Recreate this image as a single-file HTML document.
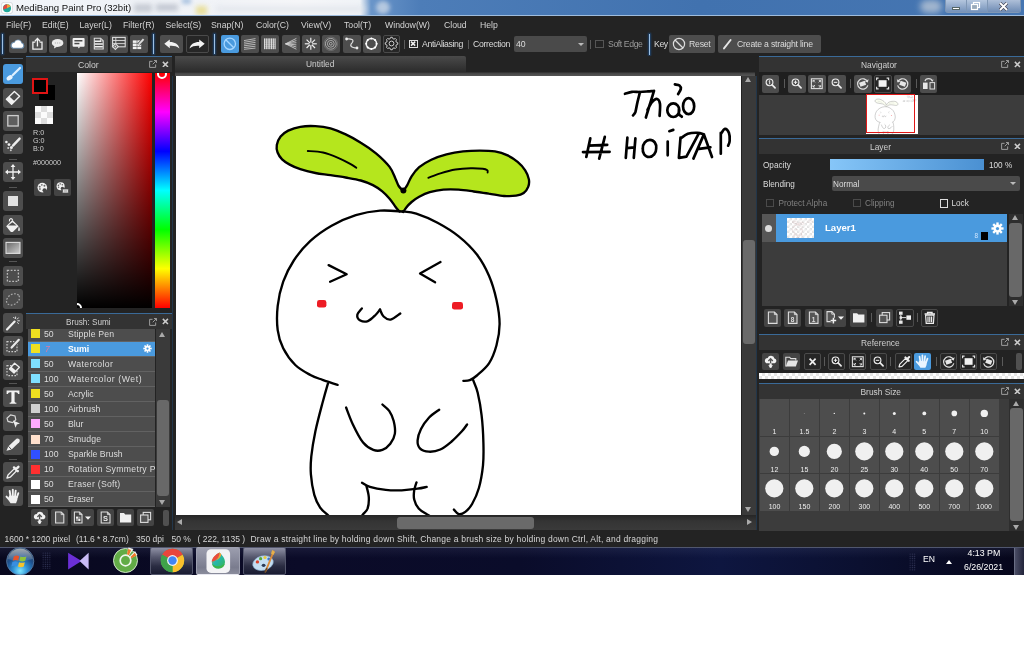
<!DOCTYPE html>
<html>
<head>
<meta charset="utf-8">
<title>MediBang Paint Pro</title>
<style>
*{box-sizing:border-box;margin:0;padding:0}
html,body{width:1024px;height:661px;overflow:hidden;background:#fff}
body{font-family:"Liberation Sans",sans-serif;font-size:9px;color:#dcdcdc;position:relative}
#app{position:absolute;left:0;top:0;width:1024px;height:575px;background:#232323;overflow:hidden;opacity:.999}
#app div,#app span,#app svg{position:absolute}
.t{white-space:nowrap;line-height:10px;font-size:8.7px;color:#dcdcdc}
#title{left:0;top:0;width:1024px;height:16px;overflow:hidden;background:linear-gradient(90deg,#f2f5f9 0,#eef1f6 150px,#f6f7f9 300px,#f1f4f8 360px,#6a95c9 371px,#4d7db8 420px,#4172af 700px,#4676b2 1024px)}
#menu{left:0;top:16px;width:1024px;height:17px;background:#232323}
#menu span{top:4px;font-size:8.7px;line-height:10px;color:#d4d4d4;white-space:nowrap}
#tb{left:0;top:33px;width:1024px;height:23px;background:#232323}
.b{width:18px;height:18px;background:#4d4d4d;border-radius:2px}
.bd{width:18px;height:18px;background:#262626;border:1px solid #4a4a4a;border-radius:2px}
.bb{width:18px;height:18px;background:#4a9ade;border-radius:2px}
.vs{width:1px;background:#9cbfe2;box-shadow:0 0 2px 1px #1f4570}
.sp{width:1px;background:#5a5a5a}
.ph{height:15px;background:#333;border-top:1px solid #3a6a98}
.ph .t{top:3px;color:#cfcfcf}
</style>
</head>
<body>
<div id="app">
<div id="title"><div style="left:134px;top:4px;width:18px;height:8px;background:#b9bec8;filter:blur(2.5px);opacity:.75"></div><div style="left:156px;top:4px;width:22px;height:7px;background:#b4bac6;filter:blur(2.5px);opacity:.75"></div><div style="left:182px;top:-2px;width:9px;height:6px;background:#8fb0d8;filter:blur(2px);opacity:.7"></div><div style="left:215px;top:6px;width:150px;height:6px;background:#dfe3ea;filter:blur(3px);opacity:.8"></div><div style="left:196px;top:6px;width:11px;height:9px;background:#e6d87a;filter:blur(2.5px);opacity:.75"></div><div style="left:376px;top:1px;width:14px;height:13px;border-radius:7px;background:#c9d6e6;filter:blur(2px);opacity:.8"></div><div style="left:920px;top:0px;width:22px;height:13px;border-radius:8px;background:#b9c6d6;filter:blur(3px);opacity:.8"></div><div style="left:0;top:15px;width:1024px;height:1px;background:#9fbcdc"></div><svg style="left:1px;top:2px" width="12" height="12" viewBox="0 0 12 12"><rect x=".3" y=".3" width="11.4" height="11.4" rx="2.8" fill="#fdfdfd" stroke="#c4c9d2" stroke-width=".6"/><circle cx="6" cy="6.3" r="4" fill="#1fa89a"/><path d="M6 2.3 A4 4 0 0 0 2.3 7.5 L6 6.3Z" fill="#e8483f"/><path d="M6 2.3 A4 4 0 0 1 9.6 4.6 L6 6.3Z" fill="#f2a33a"/></svg><span class="t" style="left:16px;top:3px;font-size:9.6px;color:#111">MediBang Paint Pro (32bit)</span><div style="left:945px;top:0;width:76px;height:13px;border:1px solid #7f97b5;border-top:none;border-radius:0 0 3px 3px;background:linear-gradient(#b4c6de,#7592ba)"></div><div style="left:966px;top:0;width:1px;height:12px;background:#7f97b5"></div><div style="left:987px;top:0;width:1px;height:12px;background:#7f97b5"></div><div style="left:988px;top:0;width:32px;height:12px;background:linear-gradient(#aebfd8,#6e8bb4)"></div><div style="left:952px;top:7px;width:8px;height:3px;background:#fff;border:1px solid #566"></div><svg style="left:970px;top:1px" width="12" height="11" viewBox="0 0 12 11"><rect x="3.5" y="1.5" width="6" height="5" fill="none" stroke="#fff" stroke-width="1.2"/><rect x="1.5" y="3.5" width="6" height="5" fill="#9ab" stroke="#fff" stroke-width="1.2"/></svg><svg style="left:998px;top:2px" width="11" height="9" viewBox="0 0 11 9"><path d="M2 1 L9 8 M9 1 L2 8" stroke="#445" stroke-width="3.2"/><path d="M2 1 L9 8 M9 1 L2 8" stroke="#fff" stroke-width="1.8"/></svg></div>
<div id="menu"><span style="left:6px">File(F)</span><span style="left:42px">Edit(E)</span><span style="left:79.5px">Layer(L)</span><span style="left:123px">Filter(R)</span><span style="left:165.5px">Select(S)</span><span style="left:211px">Snap(N)</span><span style="left:256px">Color(C)</span><span style="left:301px">View(V)</span><span style="left:344px">Tool(T)</span><span style="left:385px">Window(W)</span><span style="left:444px">Cloud</span><span style="left:480px">Help</span></div>
<div id="tb"><div class="vs" style="left:2px;top:1px;height:20px"></div><div class="b" style="left:9px;top:2px" id="tb0"><svg style="left:0;top:0" width="18" height="18" viewBox="0 0 18 18"><path d="M4.2 13H12.6A2.5 2.5 0 0 0 12.4 8.1A3.6 3.6 0 0 0 5.6 7.6A2.8 2.8 0 0 0 4.2 13Z" fill="#8cc8ff" stroke="#8cc8ff" stroke-width="1.6" opacity=".55"/><path d="M4.2 12.8H12.6A2.4 2.4 0 0 0 12.4 8.2A3.5 3.5 0 0 0 5.6 7.7A2.7 2.7 0 0 0 4.2 12.8Z" fill="#fff"/></svg></div><div class="b" style="left:29.2px;top:2px" id="tb1"><svg style="left:0;top:0" width="18" height="18" viewBox="0 0 18 18"><path d="M6.3 7.2H3.9V14.2H13V7.2H10.6" fill="none" stroke="#f0f0f0" stroke-width="1.3" /><path d="M8.45 11.6V3.6M5.9 6.2L8.45 3.4L11 6.2" fill="none" stroke="#f0f0f0" stroke-width="1.3" /></svg></div><div class="b" style="left:49.4px;top:2px" id="tb2"><svg style="left:0;top:0" width="18" height="18" viewBox="0 0 18 18"><ellipse cx="8.6" cy="8" rx="5.8" ry="3.9" fill="#ececec"/><path d="M5.5 10.5L5 13.6L8.5 11.6Z" fill="#ececec"/><circle cx="6.4" cy="8" r=".7" fill="#bbb"/><circle cx="8.6" cy="8" r=".7" fill="#bbb"/><circle cx="10.8" cy="8" r=".7" fill="#bbb"/></svg></div><div class="b" style="left:69.6px;top:2px" id="tb3"><svg style="left:0;top:0" width="18" height="18" viewBox="0 0 18 18"><rect x="2.6" y="3" width="12" height="8.8" rx="1" fill="#f2f2f2"/><path d="M7.6 11.6L8.9 13.4L10.2 11.6Z" fill="#f2f2f2"/><rect x="4.4" y="5" width="8" height="1.5" fill="#4a4a4a"/><rect x="4.4" y="7.8" width="5" height="1.5" fill="#4a4a4a"/></svg></div><div class="b" style="left:89.8px;top:2px" id="tb4"><svg style="left:0;top:0" width="18" height="18" viewBox="0 0 18 18"><path d="M4.3 3.2H10.6L13.2 5.8V14H4.3Z" fill="none" stroke="#ddd" stroke-width="1.1" /><path d="M10.4 3.4V6H13" fill="none" stroke="#ddd" stroke-width="0.9" /><path d="M4.6 6.2H11M4.6 9H12.8M4.6 11.8H12.8" fill="none" stroke="#f2f2f2" stroke-width="1.5" /></svg></div><div class="b" style="left:110px;top:2px" id="tb5"><svg style="left:0;top:0" width="18" height="18" viewBox="0 0 18 18"><rect x="2.6" y="2.4" width="12.6" height="9.4" fill="none" stroke="#ddd" stroke-width="1.1" /><path d="M2.6 5.5H15.2M2.6 8.6H15.2M5.8 2.4V11.8" fill="none" stroke="#ddd" stroke-width="0.9" /><path d="M5.4 8.6L8.3 11.5L5.4 14.4L2.5 11.5Z" fill="#4d4d4d" stroke="#ddd" stroke-width="1.1"/><circle cx="5.4" cy="11.5" r=".9" fill="#ddd"/></svg></div><div class="b" style="left:130.2px;top:2px" id="tb6"><svg style="left:0;top:0" width="18" height="18" viewBox="0 0 18 18"><rect x="2.8" y="5.4" width="3.9" height="2.5" fill="#f0f0f0"/><rect x="7.3" y="5.4" width="3.9" height="2.5" fill="#f0f0f0"/><rect x="2.8" y="8.5" width="3.9" height="2.5" fill="#f0f0f0"/><rect x="7.3" y="8.5" width="3.9" height="2.5" fill="#f0f0f0"/><rect x="2.8" y="11.6" width="3.9" height="2.5" fill="#f0f0f0"/><rect x="7.3" y="11.6" width="3.9" height="2.5" fill="#f0f0f0"/><path d="M8.6 9.6L13.4 4.4" stroke="#4d4d4d" stroke-width="3.4"/><path d="M9 9.2L13.6 4.2" stroke="#ddd" stroke-width="1.9"/><path d="M8.2 10.6L8.7 8.6L10 9.8Z" fill="#ddd"/></svg></div><div class="vs" style="left:153px;top:1px;height:20px"></div><div class="b" style="left:160px;top:2px;width:23px" id="undo"><svg style="left:0;top:0" width="23" height="18" viewBox="0 0 23 18"><path d="M4.3 8.8L9.8 4.4V7C14.5 6.9 18.3 9 19.5 13.4C16.8 10.9 13.4 10.5 9.8 10.7V13.2Z" fill="#f2f2f2"/></svg></div><div class="bd" style="left:186px;top:2px;width:23px" id="redo"><svg style="left:-1px;top:-1px" width="23" height="18" viewBox="0 0 23 18"><g transform="translate(23,0) scale(-1,1)"><path d="M4.3 8.8L9.8 4.4V7C14.5 6.9 18.3 9 19.5 13.4C16.8 10.9 13.4 10.5 9.8 10.7V13.2Z" fill="#f2f2f2"/></g></svg></div><div class="vs" style="left:214px;top:1px;height:20px"></div><div class="bb" style="left:221px;top:2px" id="sn0"><svg style="left:0;top:0" width="18" height="18" viewBox="0 0 18 18"><circle cx="8.8" cy="8.8" r="5.7" fill="none" stroke="#a6d6ff" stroke-width="1.3" /><path d="M4.8 4.8L12.8 12.8" fill="none" stroke="#a6d6ff" stroke-width="1.3" /></svg></div><div class="b" style="left:241px;top:2px" id="sn1"><svg style="left:0;top:0" width="18" height="18" viewBox="0 0 18 18"><g fill="none" stroke="#cfcfcf" stroke-width="0.8" ><path d="M3 5.6L14.5 3.6"/><path d="M3 7.3L14.5 5.5"/><path d="M3 9.1L14.5 7.4"/><path d="M3 10.8L14.5 9.3"/><path d="M3 12.6L14.5 11.2"/><path d="M3 14.3L14.5 13.1"/></g></svg></div><div class="b" style="left:261.3px;top:2px" id="sn2"><svg style="left:0;top:0" width="18" height="18" viewBox="0 0 18 18"><g fill="none" stroke="#e8e8e8" stroke-width="1.0" ><path d="M3.2 4.2H14.4" stroke-width=".5" stroke="#aaa"/><path d="M3.2 6.0H14.4" stroke-width=".5" stroke="#aaa"/><path d="M3.2 7.8H14.4" stroke-width=".5" stroke="#aaa"/><path d="M3.2 9.6H14.4" stroke-width=".5" stroke="#aaa"/><path d="M3.2 11.4H14.4" stroke-width=".5" stroke="#aaa"/><path d="M3.2 13.2H14.4" stroke-width=".5" stroke="#aaa"/><path d="M3.6 3.4V14.2"/><path d="M5.3 3.4V14.2"/><path d="M7.1 3.4V14.2"/><path d="M8.8 3.4V14.2"/><path d="M10.6 3.4V14.2"/><path d="M12.3 3.4V14.2"/><path d="M14.1 3.4V14.2"/></g></svg></div><div class="b" style="left:281.6px;top:2px" id="sn3"><svg style="left:0;top:0" width="18" height="18" viewBox="0 0 18 18"><g fill="none" stroke="#d8d8d8" stroke-width="0.8" ><path d="M3.6 8.8L14.4 3.4"/><path d="M3.6 8.8L14.4 5.6"/><path d="M3.6 8.8L14.4 7.7"/><path d="M3.6 8.8L14.4 9.9"/><path d="M3.6 8.8L14.4 12.0"/><path d="M3.6 8.8L14.4 14.2"/></g></svg></div><div class="b" style="left:302px;top:2px" id="sn4"><svg style="left:0;top:0" width="18" height="18" viewBox="0 0 18 18"><g fill="none" stroke="#eee" stroke-width="1.2" ><path d="M10.20 8.80L14.80 8.80"/><path d="M9.79 9.79L13.04 13.04"/><path d="M8.80 10.20L8.80 14.80"/><path d="M7.81 9.79L4.56 13.04"/><path d="M7.40 8.80L2.80 8.80"/><path d="M7.81 7.81L4.56 4.56"/><path d="M8.80 7.40L8.80 2.80"/><path d="M9.79 7.81L13.04 4.56"/></g></svg></div><div class="b" style="left:322px;top:2px" id="sn5"><svg style="left:0;top:0" width="18" height="18" viewBox="0 0 18 18"><g fill="none" stroke="#c4c4c4" stroke-width="0.75" ><circle cx="8.8" cy="8.8" r="1.4"/><circle cx="8.8" cy="8.8" r="3.4"/><circle cx="8.8" cy="8.8" r="5.4"/><circle cx="8.8" cy="8.8" r="6.8" stroke-width=".5" stroke="#888"/></g></svg></div><div class="b" style="left:342.5px;top:2px" id="sn6"><svg style="left:0;top:0" width="18" height="18" viewBox="0 0 18 18"><path d="M3.6 4C8 3.4 11.8 4.6 9 7.8C6.4 10.6 7.8 13 14 13" fill="none" stroke="#ddd" stroke-width="1.2" /><circle cx="3.6" cy="4" r="1.4" fill="#eee"/><circle cx="14" cy="13" r="1.4" fill="#eee"/></svg></div><div class="b" style="left:363px;top:2px" id="sn7"><svg style="left:0;top:0" width="18" height="18" viewBox="0 0 18 18"><circle cx="8.4" cy="8.7" r="5.2" fill="none" stroke="#eee" stroke-width="1.5" /><circle cx="13.60" cy="8.70" r="1" fill="#fff"/><circle cx="12.08" cy="12.38" r="1" fill="#fff"/><circle cx="8.40" cy="13.90" r="1" fill="#fff"/><circle cx="4.72" cy="12.38" r="1" fill="#fff"/><circle cx="3.20" cy="8.70" r="1" fill="#fff"/><circle cx="4.72" cy="5.02" r="1" fill="#fff"/><circle cx="8.40" cy="3.50" r="1" fill="#fff"/><circle cx="12.08" cy="5.02" r="1" fill="#fff"/></svg></div><div class="bd" style="left:383px;top:2px;width:17px" id="sn8"><svg style="left:-1px;top:-1px" width="17" height="18" viewBox="0 0 17 18"><path d="M14.75 7.75L14.75 9.25L13.32 9.85L12.86 10.95L13.46 12.39L12.39 13.46L10.95 12.86L9.85 13.32L9.25 14.75L7.75 14.75L7.15 13.32L6.05 12.86L4.61 13.46L3.54 12.39L4.14 10.95L3.68 9.85L2.25 9.25L2.25 7.75L3.68 7.15L4.14 6.05L3.54 4.61L4.61 3.54L6.05 4.14L7.15 3.68L7.75 2.25L9.25 2.25L9.85 3.68L10.95 4.14L12.39 3.54L13.46 4.61L12.86 6.05L13.32 7.15Z" fill="none" stroke="#cfcfcf" stroke-width="1.0" /><circle cx="8.5" cy="8.5" r="2.4" fill="none" stroke="#cfcfcf" stroke-width="1.0" /></svg></div><div class="sp" style="left:404px;top:7px;height:9px"></div><div style="left:409px;top:7px;width:9px;height:8px;border:1px solid #ddd" id="cbaa"><svg style="left:-1px;top:-1px" width="9" height="8" viewBox="0 0 9 8"><path d="M2 1.6L6.2 5.6M6.2 1.6L2 5.6" fill="none" stroke="#eee" stroke-width="1.5" /></svg></div><span class="t" style="left:422px;top:6px;letter-spacing:-.37px">AntiAliasing</span><div class="sp" style="left:468px;top:7px;height:9px"></div><span class="t" style="left:473px;top:6px;letter-spacing:-.31px">Correction</span><div style="left:514px;top:3px;width:73px;height:16px;background:#4a4a4a;border-radius:2px"></div><span class="t" style="left:516px;top:6px">40</span><div style="left:578px;top:10px;width:0;height:0;border:3px solid transparent;border-top:3px solid #bbb"></div><div class="sp" style="left:590px;top:7px;height:9px"></div><div style="left:595px;top:7px;width:9px;height:8px;border:1px solid #555"></div><span class="t" style="left:608px;top:6px;color:#9a9a9a;letter-spacing:-.4px">Soft Edge</span><div class="vs" style="left:649px;top:1px;height:21px"></div><span class="t" style="left:654px;top:6px;letter-spacing:-.4px">Key</span><div class="b" style="left:669px;top:2px;width:46px;height:18px" id="reset"><svg style="left:0;top:0" width="46" height="18" viewBox="0 0 46 18"><circle cx="10" cy="9" r="5.6" fill="none" stroke="#ddd" stroke-width="1.2" /><path d="M6 5L14 13" fill="none" stroke="#ddd" stroke-width="1.2" /></svg></div><span class="t" style="left:689px;top:6px;letter-spacing:-.24px">Reset</span><div class="b" style="left:718px;top:2px;width:103px;height:18px" id="csl"><svg style="left:0;top:0" width="103" height="18" viewBox="0 0 103 18"><path d="M6 13.4L12.6 5" stroke="#e6e6e6" stroke-width="1.9" stroke-linecap="round"/></svg></div><span class="t" style="left:737px;top:6px;letter-spacing:-.2px">Create a straight line</span></div>
<div style="left:26px;top:56px;width:146px;height:1px;background:#3f6f9d"></div><div id="lt" style="left:0;top:57px;width:26px;height:474px;background:#232323"><div style="left:3px;top:1px;width:20px;height:1px;background:#4a5a6a"></div><div class="bb" style="left:3px;top:6.799999999999997px;width:20px;height:20px;border-radius:3px" id="lt0"><svg style="left:0;top:0" width="20" height="20" viewBox="0 0 20 20"><path d="M17 4L9.8 11" stroke="#dff0ff" stroke-width="2.2" stroke-linecap="round"/><ellipse cx="6.6" cy="13.8" rx="3.3" ry="2.2" transform="rotate(-35 6.6 13.8)" fill="#e8f4ff"/></svg></div><div class="b" style="left:3px;top:30.700000000000003px;width:20px;height:20px;border-radius:3px" id="lt1"><svg style="left:0;top:0" width="20" height="20" viewBox="0 0 20 20"><path d="M11.4 3.6L16.6 8.2L8.6 16.2L3.4 11.2Z" fill="none" stroke="#f2f2f2" stroke-width="1.4" stroke-linejoin="round"/><path d="M6.4 8.4L11.6 13.2L8.6 16.2L3.4 11.2Z" fill="#f2f2f2"/></svg></div><div class="b" style="left:3px;top:54px;width:20px;height:20px;border-radius:3px" id="lt2"><svg style="left:0;top:0" width="20" height="20" viewBox="0 0 20 20"><rect x="4.8" y="4.6" width="10.4" height="10.4" fill="#5e5e5e" stroke="#ccc" stroke-width="1.3"/></svg></div><div class="b" style="left:3px;top:77px;width:20px;height:20px;border-radius:3px" id="lt3"><svg style="left:0;top:0" width="20" height="20" viewBox="0 0 20 20"><path d="M16.6 4.6L10 11.6" stroke="#eee" stroke-width="2.4" stroke-linecap="round"/><circle cx="3.4" cy="8" r="1.3" fill="#eee"/><circle cx="6" cy="10.6" r="1.4" fill="#eee"/><circle cx="8.4" cy="13.4" r="1.5" fill="#eee"/><circle cx="5.2" cy="14" r="1" fill="#ccc"/><circle cx="7.8" cy="16.2" r="1" fill="#ccc"/></svg></div><div class="b" style="left:3px;top:105.19999999999999px;width:20px;height:20px;border-radius:3px" id="lt4"><svg style="left:0;top:0" width="20" height="20" viewBox="0 0 20 20"><path d="M10 3.4V16.6M3.4 10H16.6" fill="none" stroke="#f0f0f0" stroke-width="1.3" /><path d="M10 2L12.4 5H7.6ZM10 18L12.4 15H7.6ZM2 10L5 7.6V12.4ZM18 10L15 7.6V12.4Z" fill="#f0f0f0"/></svg></div><div class="b" style="left:3px;top:134.3px;width:20px;height:20px;border-radius:3px" id="lt5"><svg style="left:0;top:0" width="20" height="20" viewBox="0 0 20 20"><rect x="5" y="5" width="10" height="10" fill="#e2e2e2"/></svg></div><div class="b" style="left:3px;top:157.7px;width:20px;height:20px;border-radius:3px" id="lt6"><svg style="left:0;top:0" width="20" height="20" viewBox="0 0 20 20"><path d="M3.2 11.2L9.4 5L15.6 11.2L10 16.8Q8.6 17.6 7.4 16.4Z" fill="#f0f0f0"/><path d="M5.2 10.6L9.4 7.2L13.6 10.6Z" fill="#4d4d4d"/><path d="M6.4 6.4C6 3.4 8.6 2.6 9.8 5.4" fill="none" stroke="#f0f0f0" stroke-width="1.1" /><path d="M15.8 11.6C17 13.4 17 14.4 16.6 15.8C15.8 16.4 15 15.6 15.2 14.4Z" fill="#f0f0f0"/></svg></div><div class="b" style="left:3px;top:180.7px;width:20px;height:20px;border-radius:3px" id="lt7"><svg style="left:0;top:0" width="20" height="20" viewBox="0 0 20 20"><defs><linearGradient id="gg" x1="0" y1="0" x2="1" y2="1"><stop offset="0" stop-color="#666"/><stop offset="1" stop-color="#cfcfcf"/></linearGradient></defs><rect x="3" y="4.4" width="14" height="11" fill="url(#gg)" stroke="#ddd" stroke-width="1.1"/></svg></div><div class="b" style="left:3px;top:208.8px;width:20px;height:20px;border-radius:3px" id="lt8"><svg style="left:0;top:0" width="20" height="20" viewBox="0 0 20 20"><rect x="4.4" y="4.4" width="11" height="11" fill="none" stroke="#b8b8b8" stroke-width="1.3" stroke-dasharray="1.8 1.5"/></svg></div><div class="b" style="left:3px;top:232px;width:20px;height:20px;border-radius:3px" id="lt9"><svg style="left:0;top:0" width="20" height="20" viewBox="0 0 20 20"><ellipse cx="10" cy="10.4" rx="7" ry="5" transform="rotate(-32 10 10.4)" fill="none" stroke="#a8a8a8" stroke-width="1.2" stroke-dasharray="1.7 1.5"/></svg></div><div class="b" style="left:3px;top:255.60000000000002px;width:20px;height:20px;border-radius:3px" id="lt10"><svg style="left:0;top:0" width="20" height="20" viewBox="0 0 20 20"><path d="M4 16.4L11.6 8.6" stroke="#eee" stroke-width="2.2" stroke-linecap="round"/><path d="M12.6 3.6V6M15.6 4.6L14 6.4M16.8 7.8H14.4M15.8 10.8L14.2 9.4M11.4 5.4L10.4 4" fill="none" stroke="#ddd" stroke-width="1" /></svg></div><div class="b" style="left:3px;top:278.9px;width:20px;height:20px;border-radius:3px" id="lt11"><svg style="left:0;top:0" width="20" height="20" viewBox="0 0 20 20"><rect x="4" y="5.6" width="10" height="10" fill="none" stroke="#ccc" stroke-width="1.2" stroke-dasharray="1.6 1.4"/><path d="M15.8 3.8L8.6 11.6" stroke="#4d4d4d" stroke-width="4"/><path d="M15.8 3.8L8.6 11.6" stroke="#e8e8e8" stroke-width="2.2" stroke-linecap="round"/></svg></div><div class="b" style="left:3px;top:302.5px;width:20px;height:20px;border-radius:3px" id="lt12"><svg style="left:0;top:0" width="20" height="20" viewBox="0 0 20 20"><rect x="4" y="5.6" width="10" height="10" fill="none" stroke="#ccc" stroke-width="1.2" stroke-dasharray="1.6 1.4"/><path d="M11.6 3.2L16.4 7.2L11 13L6.4 9Z" fill="#4d4d4d" stroke="#eee" stroke-width="1.3" stroke-linejoin="round"/><path d="M8.4 6.8L13 10.8L11 13L6.4 9Z" fill="#eee"/></svg></div><div class="b" style="left:3px;top:330px;width:20px;height:20px;border-radius:3px" id="lt13"><svg style="left:0;top:0" width="20" height="20" viewBox="0 0 20 20"><path d="M3.6 3.4H16.4V7H15.2Q14.8 5.2 13 5.2H11.6V14.4Q11.6 15.8 13.4 15.8V16.8H6.6V15.8Q8.4 15.8 8.4 14.4V5.2H7Q5.2 5.2 4.8 7H3.6Z" fill="#f2f2f2"/></svg></div><div class="b" style="left:3px;top:354px;width:20px;height:20px;border-radius:3px" id="lt14"><svg style="left:0;top:0" width="20" height="20" viewBox="0 0 20 20"><path d="M4 7.2L7.6 3.8L12 5L12.8 8.8L9.6 11.6L5 10.4Z" fill="none" stroke="#d8d8d8" stroke-width="1.2" /><path d="M10 9.4L17 12.6L13.8 13.6L12.6 16.8Z" fill="#eee"/></svg></div><div class="b" style="left:3px;top:377.6px;width:20px;height:20px;border-radius:3px" id="lt15"><svg style="left:0;top:0" width="20" height="20" viewBox="0 0 20 20"><path d="M3.4 15.8L5.4 11.2L13.4 3.8Q15 3 16.4 4.4Q17.4 5.8 16.2 7.2L8.6 14.6Z" fill="#eee"/><path d="M5.4 11.2L8.6 14.6" stroke="#4d4d4d" stroke-width="1"/></svg></div><div class="b" style="left:3px;top:405.4px;width:20px;height:20px;border-radius:3px" id="lt16"><svg style="left:0;top:0" width="20" height="20" viewBox="0 0 20 20"><path d="M4 16L5 13L11.4 6.6L13.6 8.8L7.2 15.2Z" fill="none" stroke="#eee" stroke-width="1.3" stroke-linejoin="round"/><path d="M11 5.4L14.8 9.2M13 7.2L15.4 4.8" stroke="#eee" stroke-width="2.4" stroke-linecap="round"/></svg></div><div class="b" style="left:3px;top:428.8px;width:20px;height:20px;border-radius:3px" id="lt17"><svg style="left:0;top:0" width="20" height="20" viewBox="0 0 20 20"><g stroke="#f0f0f0" stroke-width="1.9" stroke-linecap="round" fill="none"><path d="M7.5 10.4L6.7 5M9.8 10L9.8 3.6M12 10.4L12.7 4.6M13.8 11.4L15.3 7.2M6.2 13.6L3.5 10.6"/></g><path d="M6.2 9.6L14.6 10.2Q14.8 14.4 13 17.2H7.6Q5.4 14.8 5.2 12Z" fill="#f0f0f0"/></svg></div><div style="left:9px;top:101.5px;width:8px;height:1px;background:#555"></div><div style="left:9px;top:129.5px;width:8px;height:1px;background:#555"></div><div style="left:9px;top:204px;width:8px;height:1px;background:#555"></div><div style="left:9px;top:326px;width:8px;height:1px;background:#555"></div><div style="left:9px;top:401.8px;width:8px;height:1px;background:#555"></div></div>
<div id="colp" style="left:26px;top:57px;width:146px;height:256px;background:#232323"><div class="ph" style="left:0;top:0;width:146px;border-top:none"><span class="t" style="left:52px">Color</span><svg style="left:123px;top:3.2px" width="8" height="8" viewBox="0 0 9 9"><path d="M4 1.5H0.7V8.3H7.5V5" fill="none" stroke="#aaa" stroke-width="1"/><path d="M4.2 4.8L8.3 0.7M5.6 0.6H8.4V3.4" fill="none" stroke="#aaa" stroke-width="1"/></svg><svg style="left:136px;top:3.6px" width="6.8" height="6.8" viewBox="0 0 8 8"><path d="M1 1L7 7M7 1L1 7" stroke="#ccc" stroke-width="1.8"/></svg></div><div style="left:13.4px;top:28.3px;width:15.7px;height:14.6px;background:#000"></div><div style="left:5.9px;top:20.9px;width:16.2px;height:15.8px;background:#000;border:2px solid #e01414"></div><div style="left:9px;top:49px;width:17.5px;height:17.5px;background:#fbfbfb"><div style="left:6px;top:0;width:6px;height:6px;background:#dedede"></div><div style="left:0;top:6px;width:6px;height:6px;background:#dedede"></div><div style="left:12px;top:6px;width:5.5px;height:6px;background:#dedede"></div><div style="left:6px;top:12px;width:6px;height:5.5px;background:#dedede"></div></div><span class="t" style="left:7px;top:72px;font-size:7.2px;line-height:8px;color:#ccc">R:0</span><span class="t" style="left:7px;top:80px;font-size:7.2px;line-height:8px;color:#ccc">G:0</span><span class="t" style="left:7px;top:88px;font-size:7.2px;line-height:8px;color:#ccc">B:0</span><span class="t" style="left:7px;top:102px;font-size:7.2px;line-height:8px;color:#ccc">#000000</span><div class="b" style="left:8px;top:121.5px;width:17px;height:17px;background:#444" id="pal0"><svg style="left:0;top:0" width="17" height="17" viewBox="0 0 17 17"><circle cx="8.3" cy="8.6" r="4.8" fill="#f2f2f2"/><circle cx="10.5" cy="11.2" r="2.0" fill="#444"/><circle cx="5.68" cy="7.65" r="0.96" fill="#666"/><circle cx="7.82" cy="5.86" r="0.96" fill="#777"/><circle cx="10.43" cy="6.81" r="0.96" fill="#666"/><circle cx="5.89" cy="9.99" r="0.96" fill="#777"/></svg></div><div class="b" style="left:28px;top:121.5px;width:17px;height:17px;background:#444" id="pal1"><svg style="left:0;top:0" width="17" height="17" viewBox="0 0 17 17"><circle cx="6.6" cy="7.2" r="4.0" fill="#f2f2f2"/><circle cx="8.4" cy="9.4" r="1.7" fill="#444"/><circle cx="4.42" cy="6.41" r="0.80" fill="#666"/><circle cx="6.20" cy="4.92" r="0.80" fill="#777"/><circle cx="8.38" cy="5.71" r="0.80" fill="#666"/><circle cx="4.59" cy="8.36" r="0.80" fill="#777"/><rect x="8.4" y="10" width="6" height="4" rx=".6" fill="#f2f2f2" stroke="#444" stroke-width=".8"/><path d="M9.6 12H13.2" stroke="#777" stroke-width=".8"/></svg></div><div style="left:51px;top:16px;width:74.8px;height:235px;background:linear-gradient(0deg,#000,rgba(0,0,0,0)),linear-gradient(90deg,#fff,#f00);overflow:hidden"><div style="left:-5px;top:229.5px;width:10px;height:10px;border:2px solid #fff;border-radius:50%"></div></div><div style="left:128.8px;top:16px;width:15.4px;height:235px;background:linear-gradient(180deg,#f00 0%,#f0f 16.6%,#00f 33.3%,#0ff 50%,#0f0 66.6%,#ff0 83.3%,#f00 100%);overflow:hidden"><div style="left:2.5px;top:-4.5px;width:10px;height:10px;border:2px solid #fff;border-radius:50%"></div></div></div>
<div id="brp" style="left:26px;top:313px;width:146px;height:218px;background:#232323"><div class="ph" style="left:0;top:0;width:146px;height:16px"><span class="t" style="left:40px;top:4px;font-size:8.2px">Brush: Sumi</span><svg style="left:123px;top:3.6px" width="8" height="8" viewBox="0 0 9 9"><path d="M4 1.5H0.7V8.3H7.5V5" fill="none" stroke="#aaa" stroke-width="1"/><path d="M4.2 4.8L8.3 0.7M5.6 0.6H8.4V3.4" fill="none" stroke="#aaa" stroke-width="1"/></svg><svg style="left:136px;top:4.2px" width="6.8" height="6.8" viewBox="0 0 8 8"><path d="M1 1L7 7M7 1L1 7" stroke="#ccc" stroke-width="1.8"/></svg></div><div style="left:2px;top:16px;width:126.5px;height:178px;background:#626262;overflow:hidden" id="brl"><div style="left:0;top:-2.20px;width:128px;height:14px;background:#4d4d4d"><div style="left:2.5px;top:2.5px;width:9px;height:9px;background:#f0e020"></div><span class="t" style="left:16px;top:2px">50</span><span class="t" style="left:40px;top:2px;letter-spacing:0.16px">Stipple Pen</span></div><div style="left:0;top:12.83px;width:128px;height:14px;background:#4a9ade"><div style="left:2.5px;top:2.5px;width:9px;height:9px;background:#f0e020"></div><span class="t" style="left:17px;top:2px;color:#e07aa0;font-style:italic">7</span><span class="t" style="left:40px;top:2px;color:#fff;font-weight:bold">Sumi</span><svg style="left:114.5px;top:2.5px" width="9" height="9" viewBox="-6 -6 12 12"><g fill="#fff"><circle r="3.6"/><rect x="-1.1" y="-5.6" width="2.2" height="3" transform="rotate(0)"/><rect x="-1.1" y="-5.6" width="2.2" height="3" transform="rotate(45)"/><rect x="-1.1" y="-5.6" width="2.2" height="3" transform="rotate(90)"/><rect x="-1.1" y="-5.6" width="2.2" height="3" transform="rotate(135)"/><rect x="-1.1" y="-5.6" width="2.2" height="3" transform="rotate(180)"/><rect x="-1.1" y="-5.6" width="2.2" height="3" transform="rotate(225)"/><rect x="-1.1" y="-5.6" width="2.2" height="3" transform="rotate(270)"/><rect x="-1.1" y="-5.6" width="2.2" height="3" transform="rotate(315)"/></g><circle r="1.5" fill="#4a9ade"/></svg></div><div style="left:0;top:27.86px;width:128px;height:14px;background:#4d4d4d"><div style="left:2.5px;top:2.5px;width:9px;height:9px;background:#7fe0ff"></div><span class="t" style="left:16px;top:2px">50</span><span class="t" style="left:40px;top:2px;letter-spacing:0.36px">Watercolor</span></div><div style="left:0;top:42.89px;width:128px;height:14px;background:#4d4d4d"><div style="left:2.5px;top:2.5px;width:9px;height:9px;background:#7fe0ff"></div><span class="t" style="left:16px;top:2px">100</span><span class="t" style="left:40px;top:2px;letter-spacing:0.56px">Watercolor (Wet)</span></div><div style="left:0;top:57.92px;width:128px;height:14px;background:#4d4d4d"><div style="left:2.5px;top:2.5px;width:9px;height:9px;background:#f0e020"></div><span class="t" style="left:16px;top:2px">50</span><span class="t" style="left:40px;top:2px;letter-spacing:0px">Acrylic</span></div><div style="left:0;top:72.95px;width:128px;height:14px;background:#4d4d4d"><div style="left:2.5px;top:2.5px;width:9px;height:9px;background:#d0d0d0"></div><span class="t" style="left:16px;top:2px">100</span><span class="t" style="left:40px;top:2px;letter-spacing:0px">Airbrush</span></div><div style="left:0;top:87.98px;width:128px;height:14px;background:#4d4d4d"><div style="left:2.5px;top:2.5px;width:9px;height:9px;background:#ffaaff"></div><span class="t" style="left:16px;top:2px">50</span><span class="t" style="left:40px;top:2px;letter-spacing:0px">Blur</span></div><div style="left:0;top:103.01px;width:128px;height:14px;background:#4d4d4d"><div style="left:2.5px;top:2.5px;width:9px;height:9px;background:#ffe0cc"></div><span class="t" style="left:16px;top:2px">70</span><span class="t" style="left:40px;top:2px;letter-spacing:0.15px">Smudge</span></div><div style="left:0;top:118.04px;width:128px;height:14px;background:#4d4d4d"><div style="left:2.5px;top:2.5px;width:9px;height:9px;background:#3050ff"></div><span class="t" style="left:16px;top:2px">100</span><span class="t" style="left:40px;top:2px;letter-spacing:0px">Sparkle Brush</span></div><div style="left:0;top:133.07px;width:128px;height:14px;background:#4d4d4d"><div style="left:2.5px;top:2.5px;width:9px;height:9px;background:#ff3030"></div><span class="t" style="left:16px;top:2px">10</span><span class="t" style="left:40px;top:2px;letter-spacing:0.3px">Rotation Symmetry P</span></div><div style="left:0;top:148.10px;width:128px;height:14px;background:#4d4d4d"><div style="left:2.5px;top:2.5px;width:9px;height:9px;background:#ffffff"></div><span class="t" style="left:16px;top:2px">50</span><span class="t" style="left:40px;top:2px;letter-spacing:0.25px">Eraser (Soft)</span></div><div style="left:0;top:163.13px;width:128px;height:14px;background:#4d4d4d"><div style="left:2.5px;top:2.5px;width:9px;height:9px;background:#ffffff"></div><span class="t" style="left:16px;top:2px">50</span><span class="t" style="left:40px;top:2px;letter-spacing:0px">Eraser</span></div></div><div style="left:129.5px;top:16px;width:14.5px;height:178px;background:#3a3a3a"></div><div style="left:130.5px;top:87px;width:12.5px;height:96px;background:#686868;border-radius:3px"></div><div style="left:133px;top:19px;width:0;height:0;border:3.5px solid transparent;border-bottom:5px solid #aaa;border-top:none"></div><div style="left:133px;top:186.5px;width:0;height:0;border:3.5px solid transparent;border-top:5px solid #aaa;border-bottom:none"></div><div class="b" style="left:5.1px;top:196px;width:17px;height:17px;background:#444" id="bt0"><svg style="left:0;top:0" width="17" height="17" viewBox="0 0 17 17"><g transform="translate(-1.6,-1.6) scale(1.18)"><path d="M4.9 10.0h7.2a2 2 0 0 0 -.2 -3.9a3 3 0 0 0 -5.8 -.4a2.3 2.3 0 0 0 -1.2 4.3Z" fill="#f2f2f2"/></g><path d="M8.6 6V11M6.4 8L8.6 5.6L10.8 8" fill="none" stroke="#555" stroke-width="1.3"/><path d="M8.6 10.4V14.6" stroke="#f2f2f2" stroke-width="2.2"/><path d="M6.2 12.2L8.6 15L11 12.2Z" fill="#f2f2f2"/></svg></div><div class="b" style="left:24.9px;top:196px;width:17px;height:17px;background:#444" id="bt1"><svg style="left:0;top:0" width="17" height="17" viewBox="0 0 17 17"><path d="M4.6 3.0h5.6l2.6 2.6v8.4h-8.2Z" fill="#5a5a5a" stroke="#ddd" stroke-width="1.1"/><path d="M10.2 3.0v2.6h2.6" fill="none" stroke="#ddd" stroke-width=".9"/></svg></div><div class="b" style="left:45.1px;top:196px;width:22.5px;height:17px;background:#444" id="bt2"><svg style="left:0;top:0" width="22.5" height="17" viewBox="0 0 22.5 17"><path d="M3.4 3.0h5.0l2.6 2.6v8.4h-7.6Z" fill="none" stroke="#ddd" stroke-width="1.1"/><path d="M8.4 3.0v2.6h2.6" fill="none" stroke="#ddd" stroke-width=".9"/><rect x="5" y="7.6" width="2.2" height="2.2" fill="#eee"/><rect x="7.2" y="9.8" width="2.2" height="2.2" fill="#eee"/><rect x="7.2" y="7.6" width="2.2" height="2.2" fill="#999"/><rect x="5" y="9.8" width="2.2" height="2.2" fill="#999"/><path d="M14 7.4H20L17 10.8Z" fill="#f4f4f4"/></svg></div><div class="b" style="left:70.6px;top:196px;width:17px;height:17px;background:#444" id="bt3"><svg style="left:0;top:0" width="17" height="17" viewBox="0 0 17 17"><path d="M4.2 3.0h6.2l2.6 2.6v8.4h-8.8Z" fill="none" stroke="#ddd" stroke-width="1.1"/><path d="M10.4 3.0v2.6h2.6" fill="none" stroke="#ddd" stroke-width=".9"/><text x="8.4" y="12.4" font-family="Liberation Sans" font-size="7.5" font-weight="bold" text-anchor="middle" fill="#eee">S</text></svg></div><div class="b" style="left:90.8px;top:196px;width:17px;height:17px;background:#444" id="bt4"><svg style="left:0;top:0" width="17" height="17" viewBox="0 0 17 17"><path d="M3.0 4.0h4.0l1.2 1.4h6.0v8.0h-11.2Z" fill="#f0f0f0"/></svg></div><div class="b" style="left:111px;top:196px;width:17px;height:17px;background:#444" id="bt5"><svg style="left:0;top:0" width="17" height="17" viewBox="0 0 17 17"><rect x="6.2" y="3.4" width="7.4" height="7.4" fill="none" stroke="#ddd" stroke-width="1.1"/><rect x="3.6" y="6.0" width="7.4" height="7.4" fill="#555" stroke="#ddd" stroke-width="1.1"/></svg></div><div style="left:136.5px;top:197px;width:6.5px;height:16px;background:#505050;border-radius:2px"></div></div>
<div id="cv" style="left:172px;top:56px;width:587px;height:475px;background:#232323"><div style="left:3px;top:0;width:291px;height:16px;background:linear-gradient(#4a4a4a,#2b2b2b);border-radius:0 2px 0 0"></div><span class="t" style="left:134px;top:3px;color:#cfcfcf;font-size:8.4px">Untitled</span><div style="left:3px;top:16px;width:580px;height:4px;background:linear-gradient(#2a2a2a,#484848 40%,#555)"></div><div style="left:3.5px;top:20px;width:565.5px;height:439px;background:#fff;overflow:hidden" id="paper"><svg style="left:-3.5px;top:-20px" width="587" height="475" viewBox="172 56 587 475" fill="none" stroke="#000" stroke-width="2.35" stroke-linecap="round" stroke-linejoin="round" id="art"><g id="artg"><g id="artf"><path d="M403.2 190.8C402.4 190.0 400.0 188.0 398.7 186.0C397.4 184.0 397.1 182.2 395.6 179.0C394.1 175.8 392.9 171.2 389.6 166.9C386.3 162.6 380.8 157.3 376.0 153.3C371.2 149.3 365.9 145.8 360.8 142.7C355.8 139.5 350.8 136.8 345.7 134.4C340.6 132.0 335.6 129.7 330.5 128.3C325.4 126.9 320.4 126.3 315.4 126.1C310.4 125.8 304.8 126.0 300.3 126.8C295.8 127.5 291.5 129.0 288.2 130.6C284.9 132.2 282.5 134.2 280.6 136.6C278.7 139.0 277.3 142.3 276.8 145.0C276.3 147.7 276.7 150.1 277.6 152.5C278.5 154.9 280.1 157.4 282.1 159.4C284.1 161.4 286.7 163.0 289.7 164.6C292.7 166.2 296.0 167.8 300.3 169.2C304.6 170.6 310.4 172.0 315.4 173.0C320.4 174.0 325.4 174.4 330.5 175.2C335.6 175.9 340.6 176.6 345.7 177.5C350.8 178.4 356.3 179.2 360.8 180.5C365.3 181.8 369.4 183.3 372.9 185.1C376.4 186.9 379.2 188.8 382.0 191.1C384.8 193.4 387.3 196.0 389.6 198.7C391.9 201.3 394.0 204.9 395.6 207.0C397.2 209.1 398.9 210.8 399.5 211.5 L403.3 212 L403.2 190.8Z" fill="#b5e61d" stroke="none"/><path d="M403.3 191.0C403.9 190.1 405.7 187.8 407.1 185.4C408.5 183.0 409.6 179.3 411.6 176.3C413.6 173.3 415.9 170.0 419.2 167.2C422.5 164.4 426.8 161.8 431.3 159.7C435.9 157.6 441.2 155.8 446.5 154.4C451.8 153.0 457.6 152.0 463.1 151.4C468.7 150.8 474.5 150.6 479.8 150.6C485.1 150.6 490.4 150.7 494.9 151.4C499.4 152.2 503.2 153.3 507.0 155.1C510.8 156.8 514.6 159.4 517.6 161.9C520.6 164.4 523.3 167.4 525.2 170.3C527.1 173.2 528.4 176.6 528.9 179.4C529.4 182.2 529.1 184.6 528.2 186.9C527.3 189.2 525.7 191.5 523.7 193.0C521.7 194.5 519.4 195.2 516.1 195.7C512.8 196.2 508.6 196.3 504.0 196.0C499.4 195.7 493.9 194.4 488.8 193.7C483.8 192.9 478.7 192.2 473.7 191.5C468.7 190.8 463.7 189.9 458.6 189.6C453.6 189.3 448.2 189.2 443.4 189.6C438.6 190.0 433.8 191.0 429.8 192.2C425.8 193.4 422.2 195.2 419.2 196.8C416.2 198.4 413.8 200.2 411.6 202.0C409.5 203.8 407.7 205.7 406.3 207.4C404.9 209.1 403.8 211.2 403.3 212.0 L399.5 211.5 L403.3 191Z" fill="#b5e61d" stroke="none"/><path d="M399 190 L404 190 L404.5 212 L399 212Z" fill="#b5e61d" stroke="none"/></g><g id="artl"><path d="M403.2 190.8C402.4 190.0 400.0 188.0 398.7 186.0C397.4 184.0 397.1 182.2 395.6 179.0C394.1 175.8 392.9 171.2 389.6 166.9C386.3 162.6 380.8 157.3 376.0 153.3C371.2 149.3 365.9 145.8 360.8 142.7C355.8 139.5 350.8 136.8 345.7 134.4C340.6 132.0 335.6 129.7 330.5 128.3C325.4 126.9 320.4 126.3 315.4 126.1C310.4 125.8 304.8 126.0 300.3 126.8C295.8 127.5 291.5 129.0 288.2 130.6C284.9 132.2 282.5 134.2 280.6 136.6C278.7 139.0 277.3 142.3 276.8 145.0C276.3 147.7 276.7 150.1 277.6 152.5C278.5 154.9 280.1 157.4 282.1 159.4C284.1 161.4 286.7 163.0 289.7 164.6C292.7 166.2 296.0 167.8 300.3 169.2C304.6 170.6 310.4 172.0 315.4 173.0C320.4 174.0 325.4 174.4 330.5 175.2C335.6 175.9 340.6 176.6 345.7 177.5C350.8 178.4 356.3 179.2 360.8 180.5C365.3 181.8 369.4 183.3 372.9 185.1C376.4 186.9 379.2 188.8 382.0 191.1C384.8 193.4 387.3 196.0 389.6 198.7C391.9 201.3 394.0 204.9 395.6 207.0C397.2 209.1 398.9 210.8 399.5 211.5"/><path d="M403.3 191.0C403.9 190.1 405.7 187.8 407.1 185.4C408.5 183.0 409.6 179.3 411.6 176.3C413.6 173.3 415.9 170.0 419.2 167.2C422.5 164.4 426.8 161.8 431.3 159.7C435.9 157.6 441.2 155.8 446.5 154.4C451.8 153.0 457.6 152.0 463.1 151.4C468.7 150.8 474.5 150.6 479.8 150.6C485.1 150.6 490.4 150.7 494.9 151.4C499.4 152.2 503.2 153.3 507.0 155.1C510.8 156.8 514.6 159.4 517.6 161.9C520.6 164.4 523.3 167.4 525.2 170.3C527.1 173.2 528.4 176.6 528.9 179.4C529.4 182.2 529.1 184.6 528.2 186.9C527.3 189.2 525.7 191.5 523.7 193.0C521.7 194.5 519.4 195.2 516.1 195.7C512.8 196.2 508.6 196.3 504.0 196.0C499.4 195.7 493.9 194.4 488.8 193.7C483.8 192.9 478.7 192.2 473.7 191.5C468.7 190.8 463.7 189.9 458.6 189.6C453.6 189.3 448.2 189.2 443.4 189.6C438.6 190.0 433.8 191.0 429.8 192.2C425.8 193.4 422.2 195.2 419.2 196.8C416.2 198.4 413.8 200.2 411.6 202.0C409.5 203.8 407.7 205.7 406.3 207.4C404.9 209.1 403.8 211.2 403.3 212.0"/><circle cx="403.4" cy="190.6" r="3" fill="#000" stroke="none"/><path d="M307.8 151.0C310.3 151.2 317.9 151.4 323.0 152.5C328.1 153.6 333.6 155.9 338.1 157.8C342.6 159.7 347.2 162.2 350.2 163.9C353.2 165.6 355.3 167.1 356.3 167.7" stroke-width="1.9"/><path d="M428.3 177.8C430.3 177.1 435.9 174.7 440.4 173.3C444.9 171.9 450.4 170.3 455.5 169.5C460.6 168.7 466.1 168.4 470.7 168.3C475.2 168.2 480.0 168.5 482.8 168.8C485.6 169.1 486.5 169.7 487.3 170.3C488.1 170.9 487.6 172.1 487.6 172.5" stroke-width="1.9"/><path d="M402.7 211.5C398.9 211.3 387.8 210.0 380.0 210.6C372.2 211.2 363.9 212.6 355.8 215.1C347.7 217.6 339.2 221.4 331.6 225.7C324.0 230.0 316.7 235.1 310.4 240.9C304.1 246.7 298.3 253.7 293.8 260.5C289.3 267.3 285.9 274.1 283.2 281.7C280.5 289.3 278.6 297.8 277.7 305.9C276.8 314.0 276.8 323.0 277.7 330.1C278.6 337.2 280.3 342.5 283.2 348.3C286.1 354.1 290.8 360.6 295.3 365.0C299.8 369.4 305.9 372.5 310.4 375.0C314.9 377.5 318.0 378.2 322.5 379.8C327.0 381.4 335.1 384.0 337.6 384.8"/><path d="M402.7 211.5C405.0 211.8 410.5 211.7 416.3 213.6C422.1 215.5 430.4 218.9 437.5 222.7C444.6 226.5 452.1 231.0 458.7 236.3C465.3 241.6 471.8 247.9 476.9 254.5C481.9 261.1 485.7 268.1 489.0 275.7C492.3 283.3 494.7 291.8 496.5 299.9C498.3 308.0 499.6 316.5 499.6 324.1C499.6 331.7 498.3 338.8 496.5 345.3C494.7 351.9 492.3 358.4 489.0 363.4C485.7 368.4 480.1 372.7 476.9 375.5C473.7 378.3 472.1 379.3 469.8 380.2C467.6 381.1 464.5 380.8 463.4 380.9"/><path d="M327.9 383.6C326.9 387.0 324.3 396.1 322.2 404.0C320.1 411.9 317.2 422.6 315.4 431.3C313.6 440.0 312.1 449.1 311.3 456.3C310.6 463.5 310.4 468.0 310.9 474.4C311.4 480.8 312.8 489.4 314.3 494.9C315.8 500.4 317.9 504.1 320.0 507.3C322.1 510.5 325.1 512.6 326.8 514.2C328.5 515.8 329.5 516.5 330.0 517.0"/><path d="M473.2 380.2C473.9 382.3 476.3 386.8 477.7 392.7C479.1 398.6 480.7 407.1 481.6 415.4C482.6 423.7 483.2 434.3 483.4 442.6C483.6 450.9 483.8 457.7 483.0 465.3C482.2 472.9 480.7 481.6 478.9 488.0C477.1 494.4 474.4 500.0 472.1 504.0C469.8 508.0 467.5 510.2 465.3 511.9C463.1 513.6 460.8 514.6 458.9 514.2C457.0 513.8 454.7 510.4 453.9 509.6"/><path d="M346.1 407.5C347.2 410.3 350.1 418.6 352.9 424.5C355.7 430.4 359.7 438.4 363.1 442.6C366.5 446.8 370.1 448.7 373.3 449.9C376.5 451.1 379.6 450.9 382.4 449.9C385.2 448.9 388.2 446.5 390.3 443.8C392.4 441.1 394.3 437.4 394.9 433.6C395.5 429.8 394.6 424.9 393.7 421.1C392.8 417.3 391.1 413.7 389.2 410.9C387.3 408.1 383.5 405.6 382.4 404.5"/><path d="M439.2 409.7C437.5 411.0 431.9 414.5 428.9 417.7C425.9 420.9 422.9 425.2 421.0 429.0C419.1 432.8 417.8 437.2 417.6 440.4C417.4 443.6 418.0 446.4 419.9 448.3C421.8 450.2 425.5 451.5 428.9 451.7C432.3 451.9 436.5 451.2 440.3 449.5C444.1 447.8 448.0 444.5 451.6 441.5C455.2 438.5 459.3 434.1 461.9 431.3C464.5 428.5 466.2 425.6 467.1 424.5"/><path d="M362.0 482.8C363.3 483.5 365.9 485.7 369.9 486.9C373.9 488.1 380.5 489.3 385.8 489.9C391.1 490.5 396.4 490.5 401.7 490.3C407.0 490.1 413.4 489.3 417.6 488.7C421.8 488.1 425.2 487.2 426.7 486.9"/><path d="M366.5 486.2C366.9 488.0 368.6 493.4 368.8 497.1C369.0 500.8 368.6 505.6 367.6 508.5C366.7 511.4 364.2 512.8 363.1 514.2C362.0 515.6 361.4 516.5 361.0 517.0"/><path d="M416.5 482.4C416.1 483.7 414.6 487.5 414.2 490.3C413.8 493.1 413.4 496.4 414.2 499.4C414.9 502.4 416.6 506.0 418.7 508.5C420.8 511.0 424.8 513.0 426.7 514.2C428.6 515.5 429.4 515.7 430.0 516.0"/><path d="M328.6 265.1L346.7 274.2L330.1 281.7M440.5 262L420 273.5L435.1 282.3" stroke-width="2.3"/><path d="M361.9 308.4C361.1 309.5 357.6 313.0 357.3 315.0C357.0 317.0 358.5 319.5 360.3 320.5C362.1 321.5 365.4 322.0 367.9 321.1C370.4 320.2 373.5 316.9 375.5 315.0C377.5 313.1 379.2 310.5 380.0 309.6"/><path d="M380.0 309.6C380.6 310.8 381.8 314.8 383.6 316.5C385.4 318.2 387.8 320.1 390.6 319.6C393.4 319.1 398.7 314.5 400.3 313.5"/><rect x="317" y="300" width="9.4" height="7.6" rx="2.4" fill="#ed1c24" stroke="none"/><rect x="452" y="302" width="11" height="7.6" rx="2.4" fill="#ed1c24" stroke="none"/><path d="M625.0 93.8C626.2 93.5 629.5 92.1 632.0 91.8C634.5 91.5 637.3 92.1 640.0 92.0C642.7 91.9 645.7 91.6 648.0 91.4C650.3 91.2 653.0 91.0 654.0 90.9M640.0 92.0C639.6 93.7 638.3 98.7 637.5 102.0C636.7 105.3 636.1 109.8 635.4 112.0C634.6 114.2 633.4 114.8 633.0 115.4M654.0 90.9C653.3 93.1 651.4 99.6 650.0 104.0C648.6 108.4 646.6 115.2 645.9 117.5M647.5 110.0C648.2 108.7 650.4 103.8 652.0 102.0C653.6 100.2 655.9 98.7 657.2 99.0C658.5 99.3 659.6 101.2 660.0 104.0C660.4 106.8 659.7 113.9 659.6 115.9M679.3 110.2A6 6.8 0 1 1 667.3 110.2A6 6.8 0 1 1 679.3 110.2M679.0 108.0C679.0 109.0 678.5 112.5 679.0 114.0C679.5 115.5 681.3 116.2 681.8 116.7M674.9 84.4C675.7 84.6 678.5 84.7 679.5 85.5C680.5 86.3 681.0 87.6 680.8 89.0C680.6 90.4 678.5 93.2 678.1 94.1M694.2 106.2A5.6 8 0 1 1 683 106.2A5.6 8 0 1 1 694.2 106.2M590.3 138.4L586.3 157M604.8 136.8L599.2 158.6M588.7 145.7L607.2 144.9M583 152.1L609.6 151.8M627.4 137.6L625.8 157.8M635.4 138.4L633.8 157.8M626.6 148.1L634.6 147.3M656.2 148.4A6.7 7.9 10 1 1 642.8 148.4A6.7 7.9 10 1 1 656.2 148.4M667.7 141.6L667.7 155.3M669.3 131.2L673.3 129.9M680.5 137.6L678.9 157.8M680.5 138.5C681.7 137.7 685.0 134.8 687.8 133.8C690.6 132.9 694.8 132.7 697.5 132.8C700.2 132.9 702.8 134.1 703.9 134.4M699 133.2L686.4 156.6L679.2 157.8M703.9 134.4L693.4 158.6M703.9 134.4L712 157M699 148.9L710.4 147.3M720.8 132.8C720.8 134.5 720.8 139.5 720.8 143.0C720.8 146.5 720.8 151.9 720.8 153.7M720.8 134.0C721.5 133.1 723.5 129.0 724.9 128.8C726.2 128.6 728.1 130.8 728.9 132.8C729.7 134.8 729.8 138.7 729.7 140.8C729.6 143.0 728.4 144.9 728.1 145.7" stroke-width="2.7"/></g></g></svg></div><div style="left:569.5px;top:20px;width:14px;height:439px;background:#3a3a3a"></div><div style="left:570.5px;top:184px;width:12.5px;height:104px;background:#6a6a6a;border-radius:3px"></div><div style="left:573px;top:21px;width:0;height:0;border:3.5px solid transparent;border-bottom:5px solid #aaa;border-top:none"></div><div style="left:573px;top:450.5px;width:0;height:0;border:3.5px solid transparent;border-top:5px solid #aaa;border-bottom:none"></div><div style="left:3px;top:459px;width:581px;height:14.5px;background:linear-gradient(#262626,#343434 40%,#3a3a3a)"></div><div style="left:225px;top:460.5px;width:137px;height:12.5px;background:#6a6a6a;border-radius:3px"></div><div style="left:5px;top:463px;width:0;height:0;border:3.5px solid transparent;border-right:5px solid #aaa;border-left:none"></div><div style="left:575px;top:463px;width:0;height:0;border:3.5px solid transparent;border-left:5px solid #aaa;border-right:none"></div><div style="left:0px;top:20px;width:1px;height:454px;background:#22364a"></div><div style="left:584px;top:20px;width:1px;height:454px;background:#22364a"></div></div>
<div id="rp" style="left:759px;top:56px;width:265px;height:475px;background:#232323"><div class="ph" style="left:0;top:0px;width:265px;height:16px"><span class="t" style="left:102px;top:3px;font-size:8.4px">Navigator</span><svg style="left:242.2px;top:3.4px" width="8" height="8" viewBox="0 0 9 9"><path d="M4 1.5H0.7V8.3H7.5V5" fill="none" stroke="#aaa" stroke-width="1"/><path d="M4.2 4.8L8.3 0.7M5.6 0.6H8.4V3.4" fill="none" stroke="#aaa" stroke-width="1"/></svg><svg style="left:255px;top:4px" width="6.8" height="6.8" viewBox="0 0 8 8"><path d="M1 1L7 7M7 1L1 7" stroke="#ccc" stroke-width="1.8"/></svg></div><div style="left:0;top:16px;width:265px;height:23px;background:#1f1f1f"></div><div class="b" style="left:2.8px;top:19px;width:17.5px;height:17.5px" id="nv0"><svg style="left:0;top:0" width="17.5" height="17.5" viewBox="0 0 17.5 17.5"><g transform="translate(.9,.9) scale(.87)"><circle cx="7.6" cy="7.4" r="3.9" fill="none" stroke="#eee" stroke-width="1.3" /><path d="M10.6 10.4L14 13.8" stroke="#eee" stroke-width="1.9" stroke-linecap="round"/><path d="M6.8 6.2L7.8 5.4V9.6" fill="none" stroke="#eee" stroke-width="1.1" /></g></svg></div><div class="b" style="left:29.1px;top:19px;width:17.5px;height:17.5px" id="nv1"><svg style="left:0;top:0" width="17.5" height="17.5" viewBox="0 0 17.5 17.5"><g transform="translate(.9,.9) scale(.87)"><circle cx="7.6" cy="7.4" r="3.9" fill="none" stroke="#eee" stroke-width="1.3" /><path d="M10.6 10.4L14 13.8" stroke="#eee" stroke-width="1.9" stroke-linecap="round"/><path d="M5.6 7.4H9.6M7.6 5.4V9.4" fill="none" stroke="#eee" stroke-width="1.2" /></g></svg></div><div class="b" style="left:49.2px;top:19px;width:17.5px;height:17.5px" id="nv2"><svg style="left:0;top:0" width="17.5" height="17.5" viewBox="0 0 17.5 17.5"><rect x="3.4" y="3.8" width="10.8" height="9.8" fill="none" stroke="#e0e0e0" stroke-width="1.1" /><path d="M5 5.4L7 7.4M12.6 5.4L10.6 7.4M5 12L7 10M12.6 12L10.6 10" fill="none" stroke="#e0e0e0" stroke-width="0.9" /><path d="M5 5.4h1.8M5 5.4v1.8M12.6 5.4h-1.8M12.6 5.4v1.8M5 12h1.8M5 12v-1.8M12.6 12h-1.8M12.6 12v-1.8" fill="none" stroke="#e0e0e0" stroke-width="0.9" /></svg></div><div class="b" style="left:69px;top:19px;width:17.5px;height:17.5px" id="nv3"><svg style="left:0;top:0" width="17.5" height="17.5" viewBox="0 0 17.5 17.5"><g transform="translate(.9,.9) scale(.87)"><circle cx="7.6" cy="7.4" r="3.9" fill="none" stroke="#eee" stroke-width="1.3" /><path d="M10.6 10.4L14 13.8" stroke="#eee" stroke-width="1.9" stroke-linecap="round"/><path d="M5.6 7.4H9.6" fill="none" stroke="#eee" stroke-width="1.2" /></g></svg></div><div class="b" style="left:95px;top:19px;width:17.5px;height:17.5px" id="nv4"><svg style="left:0;top:0" width="17.5" height="17.5" viewBox="0 0 17.5 17.5"><path d="M13.6 7A5.2 5.2 0 1 0 13.8 10.4" fill="none" stroke="#e0e0e0" stroke-width="1.2" /><path d="M14.6 4.2L13.8 7.6L10.8 6.2Z" fill="#e0e0e0"/><rect x="5.6" y="6.6" width="6" height="4.2" fill="#e6e6e6" transform="rotate(-20 8.6 8.7)"/></svg></div><div class="bd" style="left:115px;top:19px;width:17.5px;height:17.5px" id="nv5"><svg style="left:-1px;top:-1px" width="17.5" height="17.5" viewBox="0 0 17.5 17.5"><rect x="4.6" y="5.2" width="8" height="6.6" fill="#f2f2f2"/><path d="M2.6 5.2V3.2H4.6M14.6 5.2V3.2H12.6M2.6 11.8V13.8H4.6M14.6 11.8V13.8H12.6" fill="none" stroke="#e0e0e0" stroke-width="1.2" /></svg></div><div class="b" style="left:134.9px;top:19px;width:17.5px;height:17.5px" id="nv6"><svg style="left:0;top:0" width="17.5" height="17.5" viewBox="0 0 17.5 17.5"><g transform="translate(17.4,0) scale(-1,1)"><path d="M13.6 7A5.2 5.2 0 1 0 13.8 10.4" fill="none" stroke="#e0e0e0" stroke-width="1.2" /><path d="M14.6 4.2L13.8 7.6L10.8 6.2Z" fill="#e0e0e0"/><rect x="5.6" y="6.6" width="6" height="4.2" fill="#e6e6e6" transform="rotate(-20 8.6 8.7)"/></g></svg></div><div class="b" style="left:160.9px;top:19px;width:17.5px;height:17.5px" id="nv7"><svg style="left:0;top:0" width="17.5" height="17.5" viewBox="0 0 17.5 17.5"><rect x="3" y="7.6" width="4.6" height="6.4" fill="#e8e8e8"/><rect x="10" y="7.6" width="4.6" height="6.4" fill="none" stroke="#ddd" stroke-width="1" /><path d="M5 6.2C5.6 2.8 11.4 2.8 12.4 6" fill="none" stroke="#ddd" stroke-width="1.1" /><path d="M11 5.4L12.6 6.8L13.6 4.6Z" fill="#ddd"/></svg></div><div class="sp" style="left:24.5px;top:23px;height:9px"></div><div class="sp" style="left:90.5px;top:23px;height:9px"></div><div class="sp" style="left:156.5px;top:23px;height:9px"></div><div style="left:0;top:39px;width:265px;height:40px;background:#3c3c3c"></div><div style="left:107px;top:39px;width:52px;height:39.2px;background:#fff;overflow:hidden"><svg style="left:0;top:0" width="52" height="40" viewBox="866 95 52 40" fill="none" stroke="#555" stroke-width="6" opacity=".5"><g transform="translate(849.9,87.6) scale(.0908)"><use href="#artf" opacity=".12"/><use href="#artl"/></g></svg></div><div style="left:107.3px;top:38px;width:49px;height:39px;border:1.5px solid #e01818"></div><div class="ph" style="left:0;top:81.5px;width:265px;height:16px"><span class="t" style="left:111px;top:3px;font-size:8.4px">Layer</span><svg style="left:242.2px;top:3.4px" width="8" height="8" viewBox="0 0 9 9"><path d="M4 1.5H0.7V8.3H7.5V5" fill="none" stroke="#aaa" stroke-width="1"/><path d="M4.2 4.8L8.3 0.7M5.6 0.6H8.4V3.4" fill="none" stroke="#aaa" stroke-width="1"/></svg><svg style="left:255px;top:4px" width="6.8" height="6.8" viewBox="0 0 8 8"><path d="M1 1L7 7M7 1L1 7" stroke="#ccc" stroke-width="1.8"/></svg></div><span class="t" style="left:4px;top:104.7px;font-size:8.2px">Opacity</span><div style="left:71px;top:102.5px;width:154px;height:11px;background:linear-gradient(90deg,#86c6f8,#4a90d2)"></div><span class="t" style="left:230px;top:104.7px;font-size:8.2px">100 %</span><span class="t" style="left:4px;top:123.7px;font-size:8.2px">Blending</span><div style="left:72.5px;top:119.5px;width:188px;height:15px;background:#4a4a4a;border-radius:2px"></div><span class="t" style="left:74px;top:123.7px;font-size:8.2px">Normal</span><div style="left:251px;top:126px;width:0;height:0;border:3px solid transparent;border-top:3px solid #bbb"></div><div style="left:7px;top:143.2px;width:8px;height:8px;border:1px solid #4a4a4a"></div><span class="t" style="left:19.5px;top:142.8px;font-size:8.2px;color:#808080">Protect Alpha</span><div style="left:94px;top:143.2px;width:8px;height:8px;border:1px solid #4a4a4a"></div><span class="t" style="left:106px;top:142.8px;font-size:8.2px;color:#808080">Clipping</span><div style="left:180.5px;top:143.2px;width:8.5px;height:8.5px;border:1px solid #ddd"></div><span class="t" style="left:192.5px;top:142.8px;font-size:8.2px">Lock</span><div style="left:2.5px;top:157.5px;width:245.5px;height:92.5px;background:#3c3c3c"></div><div style="left:2.5px;top:157.5px;width:14.5px;height:28.5px;background:#565656"></div><div style="left:17px;top:157.5px;width:231px;height:28.5px;background:#4a9ade"></div><div style="left:5.5px;top:168.5px;width:7px;height:7px;border-radius:50%;background:#ddd"></div><div style="left:27.5px;top:162px;width:27px;height:20px;background:#fff;background-image:linear-gradient(45deg,#e4e4e4 25%,transparent 25%,transparent 75%,#e4e4e4 75%),linear-gradient(45deg,#e4e4e4 25%,transparent 25%,transparent 75%,#e4e4e4 75%);background-size:5px 5px;background-position:0 0,2.5px 2.5px;overflow:hidden"><svg style="left:0;top:0" width="27" height="20" viewBox="0 0 27 20" fill="none" stroke="#a66" stroke-width="8" opacity=".45"><g transform="translate(-7,-2.5) scale(.045)"><use href="#artl"/></g></svg></div><span class="t" style="left:66px;top:167px;font-size:9.6px;font-weight:bold;color:#fff">Layer1</span><svg style="left:232px;top:166px" width="13" height="13" viewBox="-6 -6 12 12"><g fill="#fff"><circle r="3.6"/><rect x="-1.1" y="-5.6" width="2.2" height="3" transform="rotate(0)"/><rect x="-1.1" y="-5.6" width="2.2" height="3" transform="rotate(45)"/><rect x="-1.1" y="-5.6" width="2.2" height="3" transform="rotate(90)"/><rect x="-1.1" y="-5.6" width="2.2" height="3" transform="rotate(135)"/><rect x="-1.1" y="-5.6" width="2.2" height="3" transform="rotate(180)"/><rect x="-1.1" y="-5.6" width="2.2" height="3" transform="rotate(225)"/><rect x="-1.1" y="-5.6" width="2.2" height="3" transform="rotate(270)"/><rect x="-1.1" y="-5.6" width="2.2" height="3" transform="rotate(315)"/></g><circle r="1.5" fill="#4a9ade"/></svg><span class="t" style="left:215.5px;top:176px;font-size:6.5px;line-height:7px;color:#cfe6ff">8</span><div style="left:221.5px;top:176px;width:7.5px;height:8px;background:#000"></div><div style="left:249.5px;top:157.5px;width:14px;height:92.5px;background:#2e2e2e"></div><div style="left:250px;top:166.5px;width:13px;height:74px;background:#686868;border-radius:3px"></div><div style="left:253px;top:159px;width:0;height:0;border:3.5px solid transparent;border-bottom:5px solid #aaa;border-top:none"></div><div style="left:253px;top:243.5px;width:0;height:0;border:3.5px solid transparent;border-top:5px solid #aaa;border-bottom:none"></div><div class="b" style="left:5.2px;top:253px;width:17px;height:17.5px;background:#444;" id="ly0"><svg style="left:0;top:0" width="17" height="17.5" viewBox="0 0 17 17.5"><path d="M4.4 3.0h6.0l2.6 2.6v8.8h-8.6Z" fill="#555" stroke="#ddd" stroke-width="1.1"/><path d="M10.4 3.0v2.6h2.6" fill="none" stroke="#ddd" stroke-width=".9"/></svg></div><div class="b" style="left:25px;top:253px;width:17px;height:17.5px;background:#444;" id="ly1"><svg style="left:0;top:0" width="17" height="17.5" viewBox="0 0 17 17.5"><path d="M4.4 3.0h6.0l2.6 2.6v8.8h-8.6Z" fill="#555" stroke="#ddd" stroke-width="1.1"/><path d="M10.4 3.0v2.6h2.6" fill="none" stroke="#ddd" stroke-width=".9"/><text x="8.6" y="12.6" font-family="Liberation Sans" font-size="6.5" font-weight="bold" text-anchor="middle" fill="#ddd">8</text></svg></div><div class="b" style="left:45.5px;top:253px;width:17px;height:17.5px;background:#444;" id="ly2"><svg style="left:0;top:0" width="17" height="17.5" viewBox="0 0 17 17.5"><path d="M4.4 3.0h6.0l2.6 2.6v8.8h-8.6Z" fill="#555" stroke="#ddd" stroke-width="1.1"/><path d="M10.4 3.0v2.6h2.6" fill="none" stroke="#ddd" stroke-width=".9"/><text x="8.6" y="12.6" font-family="Liberation Sans" font-size="6.5" font-weight="bold" text-anchor="middle" fill="#ddd">1</text></svg></div><div class="b" style="left:65.3px;top:253px;width:22px;height:17.5px;background:#444;" id="ly3"><svg style="left:0;top:0" width="22" height="17.5" viewBox="0 0 22 17.5"><path d="M3.0 2.6h4.8l2.6 2.6v7.4h-7.4Z" fill="#555" stroke="#ddd" stroke-width="1.1"/><path d="M7.8 2.6v2.6h2.6" fill="none" stroke="#ddd" stroke-width=".9"/><path d="M6.6 11.6H12.2M9.4 8.8V14.4" stroke="#444" stroke-width="3"/><path d="M6.6 11.6H12.2M9.4 8.8V14.4" fill="none" stroke="#f2f2f2" stroke-width="1.5" /><path d="M14 7.4H20L17 10.8Z" fill="#f4f4f4"/></svg></div><div class="b" style="left:90.9px;top:253px;width:17px;height:17.5px;background:#444;" id="ly4"><svg style="left:0;top:0" width="17" height="17.5" viewBox="0 0 17 17.5"><path d="M3.0 4.2h4.1l1.2 1.4h6.1v8.0h-11.4Z" fill="#f0f0f0"/></svg></div><div class="b" style="left:116.5px;top:253px;width:17px;height:17.5px;background:#444;" id="ly5"><svg style="left:0;top:0" width="17" height="17.5" viewBox="0 0 17 17.5"><rect x="6.2" y="3.6" width="7.4" height="7.4" fill="none" stroke="#ddd" stroke-width="1.1"/><rect x="3.6" y="6.2" width="7.4" height="7.4" fill="#555" stroke="#ddd" stroke-width="1.1"/></svg></div><div class="bd" style="left:137px;top:253px;width:17.5px;height:17.5px;" id="ly6"><svg style="left:-1px;top:-1px" width="17.5" height="17.5" viewBox="0 0 17.5 17.5"><rect x="3" y="2.6" width="3.6" height="3.2" fill="#e8e8e8"/><rect x="3" y="11.6" width="3.6" height="3.2" fill="#e8e8e8"/><rect x="10.4" y="6.4" width="4.6" height="4.4" fill="#f2f2f2"/><path d="M4.8 5.8V11.6M4.8 8.6H10.4" fill="none" stroke="#ddd" stroke-width="1" /><rect x="3.6" y="7.4" width="2.4" height="2.4" fill="#e8e8e8"/></svg></div><div class="bd" style="left:162px;top:253px;width:17px;height:17.5px;" id="ly7"><svg style="left:-1px;top:-1px" width="17" height="17.5" viewBox="0 0 17 17.5"><path d="M3.6 5H14M6.6 4.8V3.4H11V4.8" fill="none" stroke="#eee" stroke-width="1.4" /><path d="M4.6 6.2H13L12.4 14.4H5.2Z" fill="none" stroke="#eee" stroke-width="1.2" /><path d="M7 7.4V13.2M8.8 7.4V13.2M10.6 7.4V13.2" fill="none" stroke="#eee" stroke-width="1.2" /></svg></div><div class="sp" style="left:112px;top:257px;height:9px"></div><div class="sp" style="left:158px;top:257px;height:9px"></div><div class="ph" style="left:0;top:278px;width:265px;height:16px"><span class="t" style="left:102px;top:3px;font-size:8.4px">Reference</span><svg style="left:242.2px;top:3.4px" width="8" height="8" viewBox="0 0 9 9"><path d="M4 1.5H0.7V8.3H7.5V5" fill="none" stroke="#aaa" stroke-width="1"/><path d="M4.2 4.8L8.3 0.7M5.6 0.6H8.4V3.4" fill="none" stroke="#aaa" stroke-width="1"/></svg><svg style="left:255px;top:4px" width="6.8" height="6.8" viewBox="0 0 8 8"><path d="M1 1L7 7M7 1L1 7" stroke="#ccc" stroke-width="1.8"/></svg></div><div class="b" style="left:3.2px;top:296.7px;width:17px;height:17.5px;background:#444;" id="rf0"><svg style="left:0;top:0" width="17" height="17.5" viewBox="0 0 17 17.5"><g transform="translate(-1.6,-1.6) scale(1.18)"><path d="M4.9 10.0h7.2a2 2 0 0 0 -.2 -3.9a3 3 0 0 0 -5.8 -.4a2.3 2.3 0 0 0 -1.2 4.3Z" fill="#f2f2f2"/></g><path d="M8.6 6V11M6.4 8L8.6 5.6L10.8 8" fill="none" stroke="#555" stroke-width="1.3"/><path d="M8.6 10.4V14.6" stroke="#f2f2f2" stroke-width="2.2"/><path d="M6.2 12.2L8.6 15L11 12.2Z" fill="#f2f2f2"/></svg></div><div class="b" style="left:23.8px;top:296.7px;width:17px;height:17.5px;background:#444;" id="rf1"><svg style="left:0;top:0" width="17" height="17.5" viewBox="0 0 17 17.5"><path d="M2.8 13.4V4.2H6.6L7.8 5.6H12.8V7.4" fill="none" stroke="#ddd" stroke-width="1.1" /><path d="M2.8 13.4L5 7.4H15L12.8 13.4Z" fill="#e6e6e6"/></svg></div><div class="bd" style="left:44.5px;top:296.7px;width:17px;height:17.5px;" id="rf2"><svg style="left:-1px;top:-1px" width="17" height="17.5" viewBox="0 0 17 17.5"><path d="M5.6 5.6L11.6 11.8M11.6 5.6L5.6 11.8" fill="none" stroke="#eee" stroke-width="1.7" /></svg></div><div class="bd" style="left:69.4px;top:296.7px;width:17px;height:17.5px;" id="rf3"><svg style="left:-1px;top:-1px" width="17" height="17.5" viewBox="0 0 17 17.5"><g transform="translate(.9,.9) scale(.87)"><circle cx="7.6" cy="7.4" r="3.9" fill="none" stroke="#eee" stroke-width="1.3" /><path d="M10.6 10.4L14 13.8" stroke="#eee" stroke-width="1.9" stroke-linecap="round"/><path d="M5.6 7.4H9.6M7.6 5.4V9.4" fill="none" stroke="#eee" stroke-width="1.2" /></g></svg></div><div class="bd" style="left:90px;top:296.7px;width:17px;height:17.5px;" id="rf4"><svg style="left:-1px;top:-1px" width="17" height="17.5" viewBox="0 0 17 17.5"><rect x="3.4" y="3.8" width="10.8" height="9.8" fill="none" stroke="#e0e0e0" stroke-width="1.1" /><path d="M5 5.4L7 7.4M12.6 5.4L10.6 7.4M5 12L7 10M12.6 12L10.6 10" fill="none" stroke="#e0e0e0" stroke-width="0.9" /><path d="M5 5.4h1.8M5 5.4v1.8M12.6 5.4h-1.8M12.6 5.4v1.8M5 12h1.8M5 12v-1.8M12.6 12h-1.8M12.6 12v-1.8" fill="none" stroke="#e0e0e0" stroke-width="0.9" /></svg></div><div class="bd" style="left:110.8px;top:296.7px;width:17px;height:17.5px;" id="rf5"><svg style="left:-1px;top:-1px" width="17" height="17.5" viewBox="0 0 17 17.5"><g transform="translate(.9,.9) scale(.87)"><circle cx="7.6" cy="7.4" r="3.9" fill="none" stroke="#eee" stroke-width="1.3" /><path d="M10.6 10.4L14 13.8" stroke="#eee" stroke-width="1.9" stroke-linecap="round"/><path d="M5.6 7.4H9.6" fill="none" stroke="#eee" stroke-width="1.2" /></g></svg></div><div class="bd" style="left:135.9px;top:296.7px;width:17px;height:17.5px;" id="rf6"><svg style="left:-1px;top:-1px" width="17" height="17.5" viewBox="0 0 17 17.5"><path d="M4 14L4.8 11.2L10.6 5.4L12.8 7.6L7 13.4Z" fill="none" stroke="#eee" stroke-width="1.2" stroke-linejoin="round"/><path d="M10.4 4.4L13.8 7.8M12.2 6L14.2 4" stroke="#eee" stroke-width="2.1" stroke-linecap="round"/></svg></div><div class="bb" style="left:155.4px;top:296.7px;width:17px;height:17.5px;" id="rf7"><svg style="left:0;top:0" width="17" height="17.5" viewBox="0 0 17 17.5"><g transform="translate(-.6,-1) scale(.92)"><g stroke="#eaf5ff" stroke-width="1.9" stroke-linecap="round" fill="none"><path d="M7.5 10.4L6.7 5M9.8 10L9.8 3.6M12 10.4L12.7 4.6M13.8 11.4L15.3 7.2M6.2 13.6L3.5 10.6"/></g><path d="M6.2 9.6L14.6 10.2Q14.8 14.4 13 17.2H7.6Q5.4 14.8 5.2 12Z" fill="#eaf5ff"/></g></svg></div><div class="bd" style="left:181.2px;top:296.7px;width:17px;height:17.5px;" id="rf8"><svg style="left:-1px;top:-1px" width="17" height="17.5" viewBox="0 0 17 17.5"><path d="M13.6 7A5.2 5.2 0 1 0 13.8 10.4" fill="none" stroke="#e0e0e0" stroke-width="1.2" /><path d="M14.6 4.2L13.8 7.6L10.8 6.2Z" fill="#e0e0e0"/><rect x="5.6" y="6.6" width="6" height="4.2" fill="#e6e6e6" transform="rotate(-20 8.6 8.7)"/></svg></div><div class="bd" style="left:201.3px;top:296.7px;width:17px;height:17.5px;" id="rf9"><svg style="left:-1px;top:-1px" width="17" height="17.5" viewBox="0 0 17 17.5"><rect x="4.6" y="5.2" width="8" height="6.6" fill="#f2f2f2"/><path d="M2.6 5.2V3.2H4.6M14.6 5.2V3.2H12.6M2.6 11.8V13.8H4.6M14.6 11.8V13.8H12.6" fill="none" stroke="#e0e0e0" stroke-width="1.2" /></svg></div><div class="bd" style="left:221.3px;top:296.7px;width:17px;height:17.5px;" id="rf10"><svg style="left:-1px;top:-1px" width="17" height="17.5" viewBox="0 0 17 17.5"><g transform="translate(17.4,0) scale(-1,1)"><path d="M13.6 7A5.2 5.2 0 1 0 13.8 10.4" fill="none" stroke="#e0e0e0" stroke-width="1.2" /><path d="M14.6 4.2L13.8 7.6L10.8 6.2Z" fill="#e0e0e0"/><rect x="5.6" y="6.6" width="6" height="4.2" fill="#e6e6e6" transform="rotate(-20 8.6 8.7)"/></g></svg></div><div class="sp" style="left:64.7px;top:301px;height:9px"></div><div class="sp" style="left:130.7px;top:301px;height:9px"></div><div class="sp" style="left:176.8px;top:301px;height:9px"></div><div class="sp" style="left:242.5px;top:301px;height:9px"></div><div style="left:257px;top:297px;width:5.5px;height:17px;background:#505050;border-radius:2px"></div><div style="left:0;top:317px;width:265px;height:5.5px;background:#fff;background-image:linear-gradient(45deg,#e6e6e6 25%,transparent 25%,transparent 75%,#e6e6e6 75%),linear-gradient(45deg,#e6e6e6 25%,transparent 25%,transparent 75%,#e6e6e6 75%);background-size:6px 6px;background-position:0 0,3px 3px"></div><div class="ph" style="left:0;top:326.5px;width:265px;height:16px"><span class="t" style="left:101.5px;top:3px;font-size:8.4px">Brush Size</span><svg style="left:242.2px;top:3.4px" width="8" height="8" viewBox="0 0 9 9"><path d="M4 1.5H0.7V8.3H7.5V5" fill="none" stroke="#aaa" stroke-width="1"/><path d="M4.2 4.8L8.3 0.7M5.6 0.6H8.4V3.4" fill="none" stroke="#aaa" stroke-width="1"/></svg><svg style="left:255px;top:4px" width="6.8" height="6.8" viewBox="0 0 8 8"><path d="M1 1L7 7M7 1L1 7" stroke="#ccc" stroke-width="1.8"/></svg></div><div style="left:0;top:342.5px;width:265px;height:132px;background:#3c3c3c"></div><div style="left:1.00px;top:343.00px;width:29.2px;height:36.7px;background:#4d4d4d"><svg style="left:0;top:0" width="29" height="29" viewBox="0 0 29 29"><circle cx="14.3" cy="14.4" r="0.15" fill="#8a8a8a"/></svg><span class="t" style="left:0;top:29px;width:29px;text-align:center;font-size:7px;line-height:8px;color:#eee">1</span></div><div style="left:30.95px;top:343.00px;width:29.2px;height:36.7px;background:#4d4d4d"><svg style="left:0;top:0" width="29" height="29" viewBox="0 0 29 29"><circle cx="14.3" cy="14.4" r="0.50" fill="#8a8a8a"/></svg><span class="t" style="left:0;top:29px;width:29px;text-align:center;font-size:7px;line-height:8px;color:#eee">1.5</span></div><div style="left:60.90px;top:343.00px;width:29.2px;height:36.7px;background:#4d4d4d"><svg style="left:0;top:0" width="29" height="29" viewBox="0 0 29 29"><circle cx="14.3" cy="14.4" r="0.70" fill="#f0f0f0"/></svg><span class="t" style="left:0;top:29px;width:29px;text-align:center;font-size:7px;line-height:8px;color:#eee">2</span></div><div style="left:90.85px;top:343.00px;width:29.2px;height:36.7px;background:#4d4d4d"><svg style="left:0;top:0" width="29" height="29" viewBox="0 0 29 29"><circle cx="14.3" cy="14.4" r="1.00" fill="#f0f0f0"/></svg><span class="t" style="left:0;top:29px;width:29px;text-align:center;font-size:7px;line-height:8px;color:#eee">3</span></div><div style="left:120.80px;top:343.00px;width:29.2px;height:36.7px;background:#4d4d4d"><svg style="left:0;top:0" width="29" height="29" viewBox="0 0 29 29"><circle cx="14.3" cy="14.4" r="1.50" fill="#f0f0f0"/></svg><span class="t" style="left:0;top:29px;width:29px;text-align:center;font-size:7px;line-height:8px;color:#eee">4</span></div><div style="left:150.75px;top:343.00px;width:29.2px;height:36.7px;background:#4d4d4d"><svg style="left:0;top:0" width="29" height="29" viewBox="0 0 29 29"><circle cx="14.3" cy="14.4" r="1.90" fill="#f0f0f0"/></svg><span class="t" style="left:0;top:29px;width:29px;text-align:center;font-size:7px;line-height:8px;color:#eee">5</span></div><div style="left:180.70px;top:343.00px;width:29.2px;height:36.7px;background:#4d4d4d"><svg style="left:0;top:0" width="29" height="29" viewBox="0 0 29 29"><circle cx="14.3" cy="14.4" r="2.80" fill="#f0f0f0"/></svg><span class="t" style="left:0;top:29px;width:29px;text-align:center;font-size:7px;line-height:8px;color:#eee">7</span></div><div style="left:210.65px;top:343.00px;width:29.2px;height:36.7px;background:#4d4d4d"><svg style="left:0;top:0" width="29" height="29" viewBox="0 0 29 29"><circle cx="14.3" cy="14.4" r="3.70" fill="#f0f0f0"/></svg><span class="t" style="left:0;top:29px;width:29px;text-align:center;font-size:7px;line-height:8px;color:#eee">10</span></div><div style="left:1.00px;top:380.70px;width:29.2px;height:36.7px;background:#4d4d4d"><svg style="left:0;top:0" width="29" height="29" viewBox="0 0 29 29"><circle cx="14.3" cy="14.4" r="4.70" fill="#f0f0f0"/></svg><span class="t" style="left:0;top:29px;width:29px;text-align:center;font-size:7px;line-height:8px;color:#eee">12</span></div><div style="left:30.95px;top:380.70px;width:29.2px;height:36.7px;background:#4d4d4d"><svg style="left:0;top:0" width="29" height="29" viewBox="0 0 29 29"><circle cx="14.3" cy="14.4" r="5.60" fill="#f0f0f0"/></svg><span class="t" style="left:0;top:29px;width:29px;text-align:center;font-size:7px;line-height:8px;color:#eee">15</span></div><div style="left:60.90px;top:380.70px;width:29.2px;height:36.7px;background:#4d4d4d"><svg style="left:0;top:0" width="29" height="29" viewBox="0 0 29 29"><circle cx="14.3" cy="14.4" r="7.60" fill="#f0f0f0"/></svg><span class="t" style="left:0;top:29px;width:29px;text-align:center;font-size:7px;line-height:8px;color:#eee">20</span></div><div style="left:90.85px;top:380.70px;width:29.2px;height:36.7px;background:#4d4d4d"><svg style="left:0;top:0" width="29" height="29" viewBox="0 0 29 29"><circle cx="14.3" cy="14.4" r="9.10" fill="#f0f0f0"/></svg><span class="t" style="left:0;top:29px;width:29px;text-align:center;font-size:7px;line-height:8px;color:#eee">25</span></div><div style="left:120.80px;top:380.70px;width:29.2px;height:36.7px;background:#4d4d4d"><svg style="left:0;top:0" width="29" height="29" viewBox="0 0 29 29"><circle cx="14.3" cy="14.4" r="9.10" fill="#f0f0f0"/></svg><span class="t" style="left:0;top:29px;width:29px;text-align:center;font-size:7px;line-height:8px;color:#eee">30</span></div><div style="left:150.75px;top:380.70px;width:29.2px;height:36.7px;background:#4d4d4d"><svg style="left:0;top:0" width="29" height="29" viewBox="0 0 29 29"><circle cx="14.3" cy="14.4" r="9.10" fill="#f0f0f0"/></svg><span class="t" style="left:0;top:29px;width:29px;text-align:center;font-size:7px;line-height:8px;color:#eee">40</span></div><div style="left:180.70px;top:380.70px;width:29.2px;height:36.7px;background:#4d4d4d"><svg style="left:0;top:0" width="29" height="29" viewBox="0 0 29 29"><circle cx="14.3" cy="14.4" r="9.10" fill="#f0f0f0"/></svg><span class="t" style="left:0;top:29px;width:29px;text-align:center;font-size:7px;line-height:8px;color:#eee">50</span></div><div style="left:210.65px;top:380.70px;width:29.2px;height:36.7px;background:#4d4d4d"><svg style="left:0;top:0" width="29" height="29" viewBox="0 0 29 29"><circle cx="14.3" cy="14.4" r="9.10" fill="#f0f0f0"/></svg><span class="t" style="left:0;top:29px;width:29px;text-align:center;font-size:7px;line-height:8px;color:#eee">70</span></div><div style="left:1.00px;top:418.40px;width:29.2px;height:36.7px;background:#4d4d4d"><svg style="left:0;top:0" width="29" height="29" viewBox="0 0 29 29"><circle cx="14.3" cy="14.4" r="9.10" fill="#f0f0f0"/></svg><span class="t" style="left:0;top:29px;width:29px;text-align:center;font-size:7px;line-height:8px;color:#eee">100</span></div><div style="left:30.95px;top:418.40px;width:29.2px;height:36.7px;background:#4d4d4d"><svg style="left:0;top:0" width="29" height="29" viewBox="0 0 29 29"><circle cx="14.3" cy="14.4" r="9.10" fill="#f0f0f0"/></svg><span class="t" style="left:0;top:29px;width:29px;text-align:center;font-size:7px;line-height:8px;color:#eee">150</span></div><div style="left:60.90px;top:418.40px;width:29.2px;height:36.7px;background:#4d4d4d"><svg style="left:0;top:0" width="29" height="29" viewBox="0 0 29 29"><circle cx="14.3" cy="14.4" r="9.10" fill="#f0f0f0"/></svg><span class="t" style="left:0;top:29px;width:29px;text-align:center;font-size:7px;line-height:8px;color:#eee">200</span></div><div style="left:90.85px;top:418.40px;width:29.2px;height:36.7px;background:#4d4d4d"><svg style="left:0;top:0" width="29" height="29" viewBox="0 0 29 29"><circle cx="14.3" cy="14.4" r="9.10" fill="#f0f0f0"/></svg><span class="t" style="left:0;top:29px;width:29px;text-align:center;font-size:7px;line-height:8px;color:#eee">300</span></div><div style="left:120.80px;top:418.40px;width:29.2px;height:36.7px;background:#4d4d4d"><svg style="left:0;top:0" width="29" height="29" viewBox="0 0 29 29"><circle cx="14.3" cy="14.4" r="9.10" fill="#f0f0f0"/></svg><span class="t" style="left:0;top:29px;width:29px;text-align:center;font-size:7px;line-height:8px;color:#eee">400</span></div><div style="left:150.75px;top:418.40px;width:29.2px;height:36.7px;background:#4d4d4d"><svg style="left:0;top:0" width="29" height="29" viewBox="0 0 29 29"><circle cx="14.3" cy="14.4" r="9.10" fill="#f0f0f0"/></svg><span class="t" style="left:0;top:29px;width:29px;text-align:center;font-size:7px;line-height:8px;color:#eee">500</span></div><div style="left:180.70px;top:418.40px;width:29.2px;height:36.7px;background:#4d4d4d"><svg style="left:0;top:0" width="29" height="29" viewBox="0 0 29 29"><circle cx="14.3" cy="14.4" r="9.10" fill="#f0f0f0"/></svg><span class="t" style="left:0;top:29px;width:29px;text-align:center;font-size:7px;line-height:8px;color:#eee">700</span></div><div style="left:210.65px;top:418.40px;width:29.2px;height:36.7px;background:#4d4d4d"><svg style="left:0;top:0" width="29" height="29" viewBox="0 0 29 29"><circle cx="14.3" cy="14.4" r="9.10" fill="#f0f0f0"/></svg><span class="t" style="left:0;top:29px;width:29px;text-align:center;font-size:7px;line-height:8px;color:#eee">1000</span></div><div style="left:250px;top:342.5px;width:15px;height:132px;background:#2e2e2e"></div><div style="left:251px;top:352px;width:13px;height:113px;background:#686868;border-radius:3px"></div><div style="left:254px;top:345px;width:0;height:0;border:3.5px solid transparent;border-bottom:5px solid #aaa;border-top:none"></div><div style="left:254px;top:468.5px;width:0;height:0;border:3.5px solid transparent;border-top:5px solid #aaa;border-bottom:none"></div></div>
<div id="st" style="left:0;top:531px;width:1024px;height:15.5px;background:#232323"><span class="t" style="left:4.5px;top:3px;font-size:8.5px;color:#d6d6d6">1600 * 1200 pixel</span><span class="t" style="left:76px;top:3px;font-size:8.5px;color:#d6d6d6">(11.6 * 8.7cm)</span><span class="t" style="left:136px;top:3px;font-size:8.5px;color:#d6d6d6">350 dpi</span><span class="t" style="left:171.5px;top:3px;font-size:8.5px;color:#d6d6d6">50 %</span><span class="t" style="left:197.5px;top:3px;font-size:8.5px;color:#d6d6d6">( 222, 1135 )</span><span class="t" style="left:250.5px;top:3px;font-size:8.5px;color:#d6d6d6;letter-spacing:.205px">Draw a straight line by holding down Shift, Change a brush size by holding down Ctrl, Alt, and dragging</span></div>
<div id="tk" style="left:0;top:546.5px;width:1024px;height:28.5px;background:linear-gradient(90deg,#08081e 0,#0b0b28 300px,#0a0c2a 520px,#0e1640 720px,#0b1030 860px,#06061a 1024px)"><div style="left:0;top:0;width:1024px;height:1px;background:#50566e"></div><div style="left:0;top:1px;width:1024px;height:10px;background:linear-gradient(rgba(120,130,170,.12),rgba(120,130,170,0))"></div><svg style="left:5px;top:0" width="30" height="29" viewBox="0 0 30 29"><defs><radialGradient id="og" cx=".5" cy=".85" r=".75"><stop offset="0" stop-color="#7fe6ff"/><stop offset=".35" stop-color="#2f93d6"/><stop offset=".7" stop-color="#1d4f8e"/><stop offset="1" stop-color="#31465e"/></radialGradient><linearGradient id="oh" x1="0" y1="0" x2="0" y2="1"><stop offset="0" stop-color="#fff" stop-opacity=".55"/><stop offset="1" stop-color="#fff" stop-opacity=".1"/></linearGradient></defs><circle cx="15.2" cy="14.3" r="13.6" fill="url(#og)" stroke="#5a7ea8" stroke-width=".8"/><path d="M2.6 12A12.8 12.8 0 0 1 27.8 12Q15 16 2.6 12Z" fill="url(#oh)"/><path d="M8.8 9.4Q11.6 7.6 14.2 9.2L13.2 13.6Q10.6 12.2 7.8 13.8Z" fill="#e8542a"/><path d="M15.4 9.4Q18 10.8 21.4 9.4L20.2 13.8Q17.2 15 14.4 13.8Z" fill="#8fc43a"/><path d="M7.4 15Q10.2 13.4 12.9 14.8L11.8 19.4Q9.4 18 6.4 19.4Z" fill="#3a8ee0"/><path d="M14 15.2Q16.8 16.4 19.8 15.2L18.8 19.6Q15.8 20.8 13 19.6Z" fill="#f4c32c"/></svg><div style="left:41.5px;top:5.5px;width:9px;height:17px;background-image:radial-gradient(circle,#34385a .55px,transparent .8px);background-size:2.25px 2.25px"></div><svg style="left:66px;top:4px" width="25" height="20" viewBox="66 550.5 25 20"><path d="M68.1 552.3V569.1L81.6 560.6Z" fill="#6b2fd6"/><path d="M88.6 552.3V569.1L79.6 560.6Z" fill="#c9bbf6"/></svg><svg style="left:112px;top:0.5px" width="27" height="27" viewBox="-13.5 -13.5 27 27"><circle r="12" fill="#62ac46" stroke="#dff0d8" stroke-width=".9"/><path d="M0 0L3 -13L8 -11.5Z M0 0L9.5 -9.5L12 -5.5Z" fill="#f3f6f0"/><path d="M1.4 -6L2.6 -11.6L5.6 -10.4L3.4 -5Z M5 -3.6L9.2 -7.8L11 -5L6 -2.2Z" fill="#f07a2a"/><circle r="5.3" fill="#62ac46" stroke="#eef6ea" stroke-width="1.7"/><circle r="2.6" fill="#62ac46"/></svg><div style="left:150.2px;top:0.5px;width:43.2px;height:27.5px;border:1px solid #53566c;border-radius:2px;background:linear-gradient(#8e90a4,#56586e 35%,#2a2c42 70%,#1a1c32)" id="tkb0"></div><div style="left:196.3px;top:0.5px;width:43.7px;height:27.5px;border:1px solid #9ea0b0;border-bottom:1.5px solid #e6e6ee;border-radius:2px;background:linear-gradient(#9c9eae,#8a8c9e 40%,#7a7c8e 75%,#8a8c9c)" id="tkb1"></div><div style="left:242.8px;top:0.5px;width:43.6px;height:27.5px;border:1px solid #53566c;border-radius:2px;background:linear-gradient(#8e90a4,#56586e 35%,#2a2c42 70%,#1a1c32)" id="tkb2"></div><svg style="left:159.5px;top:1.5px" width="25" height="25" viewBox="-12.5 -12.5 25 25"><circle r="11.7" fill="#4caf50"/><path d="M0 0L-10.13 -5.85A11.7 11.7 0 0 1 10.13 -5.85Z" fill="#e8453c"/><path d="M0 0L10.13 -5.85A11.7 11.7 0 0 1 0 11.7Z" fill="#fbc02d"/><path d="M0 0L0 11.7A11.7 11.7 0 0 1 -10.13 -5.85Z" fill="#3fa24a"/><path d="M-10.13 -5.85A11.7 11.7 0 0 1 10.13 -5.85L0 -5.4Z" fill="#e8453c"/><circle r="5.4" fill="#f4f4f4"/><circle r="4.2" fill="#4285f4"/></svg><svg style="left:206px;top:2px" width="25" height="25" viewBox="0 0 25 25"><defs><linearGradient id="mb" x1="0" y1="0" x2="1" y2="1"><stop offset="0" stop-color="#f4a22a"/><stop offset=".45" stop-color="#25b7b0"/><stop offset="1" stop-color="#39b54a"/></linearGradient></defs><rect x=".5" y=".3" width="23.6" height="23.6" rx="4.5" fill="#f3f3f5"/><path d="M13.6 3.4C16 6 19 9.2 19 13A6.6 6.6 0 0 1 5.8 13C5.8 9 10 5 13.6 3.4Z" fill="url(#mb)"/><path d="M13.6 3.4C10 5 5.8 9 5.8 12.4C9.4 12.6 13.2 9 13.6 3.4Z" fill="#ec4a3c"/><path d="M13.6 3.4C13.4 7 12 9.6 9.6 11.4C12.6 10.4 15.4 7.6 15.2 5.2Z" fill="#f7a02c"/><path d="M6 14.4A6.6 6.6 0 0 0 18.8 14.6C15 18.4 9.6 18 6 14.4Z" fill="#3db54a"/></svg><svg style="left:251px;top:2px" width="27" height="25" viewBox="251 548.5 27 25"><ellipse cx="263" cy="562.6" rx="10.4" ry="7.2" transform="rotate(-14 263 562.6)" fill="#c4def2" stroke="#8fb4d4" stroke-width=".6"/><ellipse cx="263.6" cy="564.8" rx="1.9" ry="1.6" fill="#2a3a55"/><circle cx="257.4" cy="561.4" r="1.7" fill="#d8442c"/><circle cx="260.6" cy="558.2" r="1.6" fill="#58a83a"/><circle cx="265" cy="557" r="1.6" fill="#e8c83a"/><circle cx="268.8" cy="558.6" r="1.5" fill="#3a78d0"/><path d="M273.6 551L266 570" stroke="#d98a3a" stroke-width="1.9" stroke-linecap="round"/><path d="M272.2 549.6L275 551.4L273.4 554.4L271 553Z" fill="#e6b04a"/><path d="M266.6 568L265.2 571.6" stroke="#6a4a2a" stroke-width="1.6" stroke-linecap="round"/></svg><div style="left:908.5px;top:6px;width:7px;height:18px;background-image:radial-gradient(circle,#34385a .55px,transparent .8px);background-size:2.25px 2.25px"></div><span class="t" style="left:923px;top:7px;font-size:8.6px;color:#fff">EN</span><div style="left:946px;top:13px;width:0;height:0;border:3px solid transparent;border-bottom:4px solid #fff;border-top:none"></div><span class="t" style="left:967.5px;top:1.5px;font-size:8.8px;color:#fff">4:13 PM</span><span class="t" style="left:964px;top:15.5px;font-size:8.8px;color:#fff">6/26/2021</span><div style="left:1014px;top:1px;width:10px;height:27px;border-left:1px solid #6a6e84;background:linear-gradient(90deg,#4a4d65,#22243a)"></div></div>
</div>
</body>
</html>
